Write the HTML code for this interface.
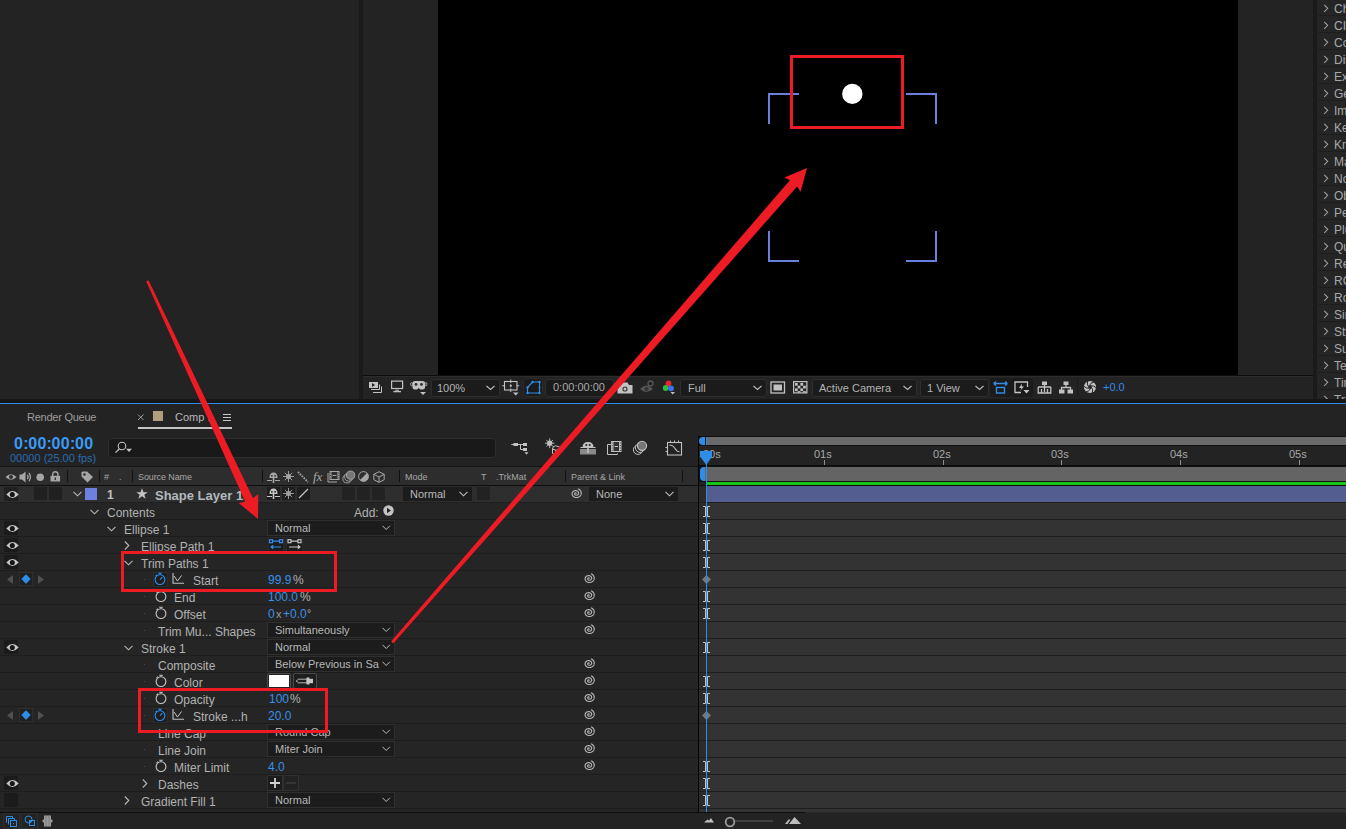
<!DOCTYPE html>
<html><head><meta charset="utf-8"><style>
html,body{margin:0;padding:0;}
body{width:1346px;height:829px;overflow:hidden;position:relative;background:#232323;font-family:"Liberation Sans",sans-serif;}
body>div,body>svg{position:absolute;white-space:pre;}

</style></head><body>
<div style="left:0px;top:0px;width:359px;height:399px;background:#232323;"></div>
<div style="left:359px;top:0px;width:4px;height:399px;background:#1a1a1a;"></div>
<div style="left:363px;top:0px;width:950px;height:375px;background:#232323;"></div>
<div style="left:438px;top:0px;width:800px;height:375px;background:#000;"></div>
<div style="left:363px;top:375px;width:950px;height:1px;background:#0c0c0c;"></div>
<div style="left:363px;top:376px;width:950px;height:23px;background:#232323;"></div>
<div style="left:363px;top:376px;width:950px;height:1px;background:#2c2c2c;"></div>
<div style="left:1313px;top:0px;width:4px;height:399px;background:#1a1a1a;"></div>
<div style="left:1317px;top:0px;width:29px;height:399px;background:#252525;"></div>
<div style="left:1318px;top:15px;width:28px;height:1px;background:#1d1d1d;"></div>
<svg style="left:1322px;top:4px;" width="8" height="9" viewBox="0 0 8 9"><path d="M2.2 0.8 L5.7 4.3 L2.2 7.8" fill="none" stroke="#a0a0a0" stroke-width="1.05"/></svg>
<div style="left:1334px;top:-3.0px;font-size:12px;line-height:24px;color:#a8a8a8;">Channel</div>
<div style="left:1318px;top:32px;width:28px;height:1px;background:#1d1d1d;"></div>
<svg style="left:1322px;top:21px;" width="8" height="9" viewBox="0 0 8 9"><path d="M2.2 0.8 L5.7 4.3 L2.2 7.8" fill="none" stroke="#a0a0a0" stroke-width="1.05"/></svg>
<div style="left:1334px;top:14.0px;font-size:12px;line-height:24px;color:#a8a8a8;">CINEMA 4D</div>
<div style="left:1318px;top:49px;width:28px;height:1px;background:#1d1d1d;"></div>
<svg style="left:1322px;top:38px;" width="8" height="9" viewBox="0 0 8 9"><path d="M2.2 0.8 L5.7 4.3 L2.2 7.8" fill="none" stroke="#a0a0a0" stroke-width="1.05"/></svg>
<div style="left:1334px;top:31.0px;font-size:12px;line-height:24px;color:#a8a8a8;">Color</div>
<div style="left:1318px;top:66px;width:28px;height:1px;background:#1d1d1d;"></div>
<svg style="left:1322px;top:55px;" width="8" height="9" viewBox="0 0 8 9"><path d="M2.2 0.8 L5.7 4.3 L2.2 7.8" fill="none" stroke="#a0a0a0" stroke-width="1.05"/></svg>
<div style="left:1334px;top:48.0px;font-size:12px;line-height:24px;color:#a8a8a8;">Distort</div>
<div style="left:1318px;top:83px;width:28px;height:1px;background:#1d1d1d;"></div>
<svg style="left:1322px;top:72px;" width="8" height="9" viewBox="0 0 8 9"><path d="M2.2 0.8 L5.7 4.3 L2.2 7.8" fill="none" stroke="#a0a0a0" stroke-width="1.05"/></svg>
<div style="left:1334px;top:65.0px;font-size:12px;line-height:24px;color:#a8a8a8;">Expression</div>
<div style="left:1318px;top:100px;width:28px;height:1px;background:#1d1d1d;"></div>
<svg style="left:1322px;top:89px;" width="8" height="9" viewBox="0 0 8 9"><path d="M2.2 0.8 L5.7 4.3 L2.2 7.8" fill="none" stroke="#a0a0a0" stroke-width="1.05"/></svg>
<div style="left:1334px;top:82.0px;font-size:12px;line-height:24px;color:#a8a8a8;">Generate</div>
<div style="left:1318px;top:117px;width:28px;height:1px;background:#1d1d1d;"></div>
<svg style="left:1322px;top:106px;" width="8" height="9" viewBox="0 0 8 9"><path d="M2.2 0.8 L5.7 4.3 L2.2 7.8" fill="none" stroke="#a0a0a0" stroke-width="1.05"/></svg>
<div style="left:1334px;top:99.0px;font-size:12px;line-height:24px;color:#a8a8a8;">Immersive</div>
<div style="left:1318px;top:134px;width:28px;height:1px;background:#1d1d1d;"></div>
<svg style="left:1322px;top:123px;" width="8" height="9" viewBox="0 0 8 9"><path d="M2.2 0.8 L5.7 4.3 L2.2 7.8" fill="none" stroke="#a0a0a0" stroke-width="1.05"/></svg>
<div style="left:1334px;top:116.0px;font-size:12px;line-height:24px;color:#a8a8a8;">Keying</div>
<div style="left:1318px;top:151px;width:28px;height:1px;background:#1d1d1d;"></div>
<svg style="left:1322px;top:140px;" width="8" height="9" viewBox="0 0 8 9"><path d="M2.2 0.8 L5.7 4.3 L2.2 7.8" fill="none" stroke="#a0a0a0" stroke-width="1.05"/></svg>
<div style="left:1334px;top:133.0px;font-size:12px;line-height:24px;color:#a8a8a8;">Knoll</div>
<div style="left:1318px;top:168px;width:28px;height:1px;background:#1d1d1d;"></div>
<svg style="left:1322px;top:157px;" width="8" height="9" viewBox="0 0 8 9"><path d="M2.2 0.8 L5.7 4.3 L2.2 7.8" fill="none" stroke="#a0a0a0" stroke-width="1.05"/></svg>
<div style="left:1334px;top:150.0px;font-size:12px;line-height:24px;color:#a8a8a8;">Matte</div>
<div style="left:1318px;top:185px;width:28px;height:1px;background:#1d1d1d;"></div>
<svg style="left:1322px;top:174px;" width="8" height="9" viewBox="0 0 8 9"><path d="M2.2 0.8 L5.7 4.3 L2.2 7.8" fill="none" stroke="#a0a0a0" stroke-width="1.05"/></svg>
<div style="left:1334px;top:167.0px;font-size:12px;line-height:24px;color:#a8a8a8;">Noise</div>
<div style="left:1318px;top:202px;width:28px;height:1px;background:#1d1d1d;"></div>
<svg style="left:1322px;top:191px;" width="8" height="9" viewBox="0 0 8 9"><path d="M2.2 0.8 L5.7 4.3 L2.2 7.8" fill="none" stroke="#a0a0a0" stroke-width="1.05"/></svg>
<div style="left:1334px;top:184.0px;font-size:12px;line-height:24px;color:#a8a8a8;">Obsolete</div>
<div style="left:1318px;top:219px;width:28px;height:1px;background:#1d1d1d;"></div>
<svg style="left:1322px;top:208px;" width="8" height="9" viewBox="0 0 8 9"><path d="M2.2 0.8 L5.7 4.3 L2.2 7.8" fill="none" stroke="#a0a0a0" stroke-width="1.05"/></svg>
<div style="left:1334px;top:201.0px;font-size:12px;line-height:24px;color:#a8a8a8;">Perspective</div>
<div style="left:1318px;top:236px;width:28px;height:1px;background:#1d1d1d;"></div>
<svg style="left:1322px;top:225px;" width="8" height="9" viewBox="0 0 8 9"><path d="M2.2 0.8 L5.7 4.3 L2.2 7.8" fill="none" stroke="#a0a0a0" stroke-width="1.05"/></svg>
<div style="left:1334px;top:218.0px;font-size:12px;line-height:24px;color:#a8a8a8;">Plugins</div>
<div style="left:1318px;top:253px;width:28px;height:1px;background:#1d1d1d;"></div>
<svg style="left:1322px;top:242px;" width="8" height="9" viewBox="0 0 8 9"><path d="M2.2 0.8 L5.7 4.3 L2.2 7.8" fill="none" stroke="#a0a0a0" stroke-width="1.05"/></svg>
<div style="left:1334px;top:235.0px;font-size:12px;line-height:24px;color:#a8a8a8;">Quick</div>
<div style="left:1318px;top:270px;width:28px;height:1px;background:#1d1d1d;"></div>
<svg style="left:1322px;top:259px;" width="8" height="9" viewBox="0 0 8 9"><path d="M2.2 0.8 L5.7 4.3 L2.2 7.8" fill="none" stroke="#a0a0a0" stroke-width="1.05"/></svg>
<div style="left:1334px;top:252.0px;font-size:12px;line-height:24px;color:#a8a8a8;">Render</div>
<div style="left:1318px;top:287px;width:28px;height:1px;background:#1d1d1d;"></div>
<svg style="left:1322px;top:276px;" width="8" height="9" viewBox="0 0 8 9"><path d="M2.2 0.8 L5.7 4.3 L2.2 7.8" fill="none" stroke="#a0a0a0" stroke-width="1.05"/></svg>
<div style="left:1334px;top:269.0px;font-size:12px;line-height:24px;color:#a8a8a8;">RG Trapcode</div>
<div style="left:1318px;top:304px;width:28px;height:1px;background:#1d1d1d;"></div>
<svg style="left:1322px;top:293px;" width="8" height="9" viewBox="0 0 8 9"><path d="M2.2 0.8 L5.7 4.3 L2.2 7.8" fill="none" stroke="#a0a0a0" stroke-width="1.05"/></svg>
<div style="left:1334px;top:286.0px;font-size:12px;line-height:24px;color:#a8a8a8;">Rowbyte</div>
<div style="left:1318px;top:321px;width:28px;height:1px;background:#1d1d1d;"></div>
<svg style="left:1322px;top:310px;" width="8" height="9" viewBox="0 0 8 9"><path d="M2.2 0.8 L5.7 4.3 L2.2 7.8" fill="none" stroke="#a0a0a0" stroke-width="1.05"/></svg>
<div style="left:1334px;top:303.0px;font-size:12px;line-height:24px;color:#a8a8a8;">Simulation</div>
<div style="left:1318px;top:338px;width:28px;height:1px;background:#1d1d1d;"></div>
<svg style="left:1322px;top:327px;" width="8" height="9" viewBox="0 0 8 9"><path d="M2.2 0.8 L5.7 4.3 L2.2 7.8" fill="none" stroke="#a0a0a0" stroke-width="1.05"/></svg>
<div style="left:1334px;top:320.0px;font-size:12px;line-height:24px;color:#a8a8a8;">Stylize</div>
<div style="left:1318px;top:355px;width:28px;height:1px;background:#1d1d1d;"></div>
<svg style="left:1322px;top:344px;" width="8" height="9" viewBox="0 0 8 9"><path d="M2.2 0.8 L5.7 4.3 L2.2 7.8" fill="none" stroke="#a0a0a0" stroke-width="1.05"/></svg>
<div style="left:1334px;top:337.0px;font-size:12px;line-height:24px;color:#a8a8a8;">Superluminal</div>
<div style="left:1318px;top:372px;width:28px;height:1px;background:#1d1d1d;"></div>
<svg style="left:1322px;top:361px;" width="8" height="9" viewBox="0 0 8 9"><path d="M2.2 0.8 L5.7 4.3 L2.2 7.8" fill="none" stroke="#a0a0a0" stroke-width="1.05"/></svg>
<div style="left:1334px;top:354.0px;font-size:12px;line-height:24px;color:#a8a8a8;">Text</div>
<div style="left:1318px;top:389px;width:28px;height:1px;background:#1d1d1d;"></div>
<svg style="left:1322px;top:378px;" width="8" height="9" viewBox="0 0 8 9"><path d="M2.2 0.8 L5.7 4.3 L2.2 7.8" fill="none" stroke="#a0a0a0" stroke-width="1.05"/></svg>
<div style="left:1334px;top:371.0px;font-size:12px;line-height:24px;color:#a8a8a8;">Time</div>
<div style="left:1318px;top:406px;width:28px;height:1px;background:#1d1d1d;"></div>
<svg style="left:1322px;top:395px;" width="8" height="9" viewBox="0 0 8 9"><path d="M2.2 0.8 L5.7 4.3 L2.2 7.8" fill="none" stroke="#a0a0a0" stroke-width="1.05"/></svg>
<div style="left:1334px;top:388.0px;font-size:12px;line-height:24px;color:#a8a8a8;">Transition</div>
<div style="left:0px;top:399px;width:1346px;height:4px;background:#171717;"></div>
<div style="left:0px;top:403px;width:1346px;height:1px;background:#2d8cec;"></div>
<svg style="left:750px;top:70px;" width="200" height="200" viewBox="0 0 200 200">
<path d="M19 54 V24 H49 M156 24 H186 V54 M19 161 V191 H49 M156 191 H186 V161" fill="none" stroke="#6b7fdc" stroke-width="2"/>
<circle cx="102.3" cy="23.9" r="10.2" fill="#fff"/>
</svg>
<svg style="left:368px;top:381px;" width="16" height="13" viewBox="0 0 16 13"><rect x="1" y="1" width="9" height="6" fill="#c2c2c2"/><path d="M4 2 L7 4 L4 6Z" fill="#232323"/>
<path d="M3 8.5 H11.5 V3.5 M5 11.5 H13.5 V5.5" fill="none" stroke="#c2c2c2" stroke-width="1"/></svg>
<svg style="left:390px;top:380px;" width="14" height="13" viewBox="0 0 14 13"><rect x="1.6" y="1.1" width="11" height="7.4" fill="none" stroke="#c2c2c2" stroke-width="1.2"/><path d="M5.2 10.3 H9 M3.3 11.6 H11" stroke="#c2c2c2" stroke-width="1.1"/></svg>
<svg style="left:410px;top:380px;" width="18" height="16" viewBox="0 0 18 16"><path d="M2.5 3 Q2.5 1 5 1 H12.5 Q15 1 15 3 V7 Q15 9.5 12.5 9.5 H10.5 L8.75 8 L7 9.5 H5 Q2.5 9.5 2.5 7 Z" fill="#c2c2c2"/><ellipse cx="1.6" cy="4.2" rx="1" ry="1.7" fill="none" stroke="#c2c2c2" stroke-width="0.8"/><ellipse cx="15.9" cy="4.2" rx="1" ry="1.7" fill="none" stroke="#c2c2c2" stroke-width="0.8"/><circle cx="6" cy="4.4" r="1.4" fill="#2a2a2a"/><circle cx="11.5" cy="4.4" r="1.4" fill="#2a2a2a"/><path d="M10 12 H16 L13 15Z" fill="#c2c2c2"/></svg>
<div style="left:431px;top:379px;width:69px;height:18px;background:#1b1b1b;border:1px solid #2e2e2e;box-sizing:border-box;border-radius:3px;"></div>
<div style="left:437px;top:377.0px;font-size:11px;line-height:22px;color:#b4b4b4;">100%</div>
<svg style="left:486px;top:385.0px;" width="9" height="6" viewBox="0 0 9 6"><path d="M0.5 1 L4.5 4.5 L8.5 1" fill="none" stroke="#bdbdbd" stroke-width="1.1"/></svg>
<svg style="left:502px;top:379px;" width="18" height="17" viewBox="0 0 18 17"><rect x="2.5" y="2.5" width="12.5" height="8.5" fill="none" stroke="#c2c2c2" stroke-width="1.1"/><path d="M8.75 0.5 V4 M8.75 9.5 V13 M0.3 6.75 H3 M14.5 6.75 H17.2" stroke="#c2c2c2" stroke-width="1"/><path d="M8.75 5 L10 6.75 L8.75 8.5 L7.5 6.75Z" fill="#c2c2c2"/><path d="M11 13.5 H16.5 L13.75 16.5Z" fill="#c2c2c2"/></svg>
<div style="left:523px;top:378px;width:20px;height:19px;background:#1b1b1b;border:1px solid #2c2c2c;box-sizing:border-box;border-radius:4px;"></div>
<svg style="left:523px;top:378px;" width="20" height="19" viewBox="0 0 20 19"><path d="M4.5 9.5 L9.5 4 H16.5 V15 H4.5 Z" fill="none" stroke="#2f8de8" stroke-width="1.2"/><circle cx="4.5" cy="9.5" r="1.2" fill="#2f8de8"/><circle cx="9.5" cy="4" r="1.2" fill="#2f8de8"/><circle cx="16.5" cy="4" r="1.2" fill="#2f8de8"/><circle cx="16.5" cy="15" r="1.2" fill="#2f8de8"/><circle cx="4.5" cy="15" r="1.2" fill="#2f8de8"/><circle cx="16.5" cy="9.5" r="0.9" fill="#2f8de8"/></svg>
<div style="left:545px;top:379px;width:69px;height:18px;background:#1b1b1b;border:1px solid #2e2e2e;box-sizing:border-box;border-radius:3px;"></div>
<div style="left:553px;top:376.0px;font-size:11px;line-height:22px;color:#a8a8a8;">0:00:00:00</div>
<svg style="left:617px;top:382px;" width="16" height="12" viewBox="0 0 16 12"><path d="M0.5 3 H4 L5.5 0.5 H10.5 L12 3 H15.5 V11.5 H0.5Z" fill="#c2c2c2"/><circle cx="8" cy="7" r="2.6" fill="#333"/><circle cx="8" cy="7" r="1.5" fill="#c2c2c2"/></svg>
<svg style="left:639px;top:380px;" width="16" height="14" viewBox="0 0 16 14"><path d="M1 9 Q7 2 14 9 Q7 15 1 9Z" fill="#555"/><circle cx="7.5" cy="9" r="2" fill="#333"/><circle cx="11.5" cy="3.5" r="2.5" fill="none" stroke="#555" stroke-width="1.3"/></svg>
<svg style="left:662px;top:380px;" width="14" height="17" viewBox="0 0 14 17"><circle cx="6.5" cy="3.5" r="2.9" fill="#e8262a"/><circle cx="3.7" cy="8" r="2.9" fill="#33b83a"/><circle cx="9" cy="8.3" r="2.9" fill="#3a73f0"/><path d="M8.5 12 H13 L10.75 14.5Z" fill="#c2c2c2"/></svg>
<div style="left:680px;top:379px;width:87px;height:18px;background:#1b1b1b;border:1px solid #2e2e2e;box-sizing:border-box;border-radius:3px;"></div>
<div style="left:688px;top:377.0px;font-size:11px;line-height:22px;color:#b4b4b4;">Full</div>
<svg style="left:753px;top:385.0px;" width="9" height="6" viewBox="0 0 9 6"><path d="M0.5 1 L4.5 4.5 L8.5 1" fill="none" stroke="#bdbdbd" stroke-width="1.1"/></svg>
<svg style="left:770px;top:381px;" width="16" height="13" viewBox="0 0 16 13"><rect x="1" y="1" width="13.5" height="11" fill="none" stroke="#c2c2c2" stroke-width="1.3"/><rect x="3.5" y="3.5" width="8.5" height="6" fill="#c2c2c2"/></svg>
<svg style="left:793px;top:381px;" width="15" height="13" viewBox="0 0 15 13"><rect x="0.6" y="0.6" width="13.3" height="11.3" fill="none" stroke="#c2c2c2" stroke-width="1.2"/>
<rect x="2" y="2" width="2.7" height="2.7" fill="#c2c2c2"/><rect x="7.4" y="2" width="2.7" height="2.7" fill="#c2c2c2"/>
<rect x="4.7" y="4.7" width="2.7" height="2.7" fill="#c2c2c2"/><rect x="10.1" y="4.7" width="2.7" height="2.7" fill="#c2c2c2"/>
<rect x="2" y="7.4" width="2.7" height="2.7" fill="#c2c2c2"/><rect x="7.4" y="7.4" width="2.7" height="2.7" fill="#c2c2c2"/>
<rect x="4.7" y="10.1" width="2.7" height="1.5" fill="#c2c2c2"/><rect x="10.1" y="10.1" width="2.7" height="1.5" fill="#c2c2c2"/></svg>
<div style="left:812px;top:379px;width:105px;height:18px;background:#1b1b1b;border:1px solid #2e2e2e;box-sizing:border-box;border-radius:3px;"></div>
<div style="left:819px;top:377.0px;font-size:11px;line-height:22px;color:#b4b4b4;">Active Camera</div>
<svg style="left:903px;top:385.0px;" width="9" height="6" viewBox="0 0 9 6"><path d="M0.5 1 L4.5 4.5 L8.5 1" fill="none" stroke="#bdbdbd" stroke-width="1.1"/></svg>
<div style="left:920px;top:379px;width:69px;height:18px;background:#1b1b1b;border:1px solid #2e2e2e;box-sizing:border-box;border-radius:3px;"></div>
<div style="left:927px;top:377.0px;font-size:11px;line-height:22px;color:#b4b4b4;">1 View</div>
<svg style="left:975px;top:385.0px;" width="9" height="6" viewBox="0 0 9 6"><path d="M0.5 1 L4.5 4.5 L8.5 1" fill="none" stroke="#bdbdbd" stroke-width="1.1"/></svg>
<div style="left:990px;top:378px;width:21px;height:19px;background:#1b1b1b;border-radius:3px;"></div>
<svg style="left:992px;top:381px;" width="17" height="13" viewBox="0 0 17 13"><path d="M1.5 2.5 H15.5 M1.5 2.5 L4 0.5 M1.5 2.5 L4 4.5 M15.5 2.5 L13 0.5 M15.5 2.5 L13 4.5" fill="none" stroke="#2f8de8" stroke-width="1.3"/><rect x="4.5" y="6.5" width="8" height="5.5" fill="none" stroke="#2f8de8" stroke-width="1.4"/></svg>
<div style="left:1011px;top:378px;width:22px;height:19px;background:#1b1b1b;border-radius:3px;"></div>
<svg style="left:1014px;top:381px;" width="16" height="14" viewBox="0 0 16 14"><path d="M13.5 6 V1 H1 V11.5 H7" fill="none" stroke="#c2c2c2" stroke-width="1.3"/><path d="M8 2.5 L5 7 H7.5 L6 10 L10 5.5 H7.8 Z" fill="#c2c2c2"/><path d="M9.5 9 H15.5 L12.5 12.5Z" fill="#c2c2c2"/></svg>
<svg style="left:1037px;top:381px;" width="15" height="13" viewBox="0 0 15 13"><rect x="5" y="0.5" width="5" height="3.5" fill="#c2c2c2"/><path d="M7.5 4 V11 M1.2 6 V12 H13.8 V6 M4.5 8 V12 M10.5 8 V12 M1.2 6 H13.8" fill="none" stroke="#c2c2c2" stroke-width="1.3"/></svg>
<svg style="left:1059px;top:381px;" width="14" height="13" viewBox="0 0 14 13"><rect x="4.5" y="0.5" width="5" height="3.5" fill="#c2c2c2"/><path d="M7 4 V6.5 M2.5 9 V6.5 H11.5 V9" fill="none" stroke="#c2c2c2" stroke-width="1.3"/><rect x="0" y="8.5" width="5.5" height="4" fill="#c2c2c2"/><rect x="8.5" y="8.5" width="5.5" height="4" fill="#c2c2c2"/></svg>
<div style="left:1077px;top:379px;width:1px;height:17px;background:#1a1a1a;"></div>
<svg style="left:1083px;top:380px;" width="14" height="14" viewBox="0 0 14 14"><circle cx="7" cy="7" r="6.1" fill="#c2c2c2"/><circle cx="7" cy="7" r="1.9" fill="#232323"/><path d="M8.69 7.62 Q10.44 9.41 9.26 13.20 M7.31 8.77 Q6.63 11.18 2.76 12.06 M5.62 8.16 Q3.19 8.77 0.50 5.85 M5.31 6.38 Q3.56 4.59 4.74 0.80 M6.69 5.23 Q7.37 2.82 11.24 1.94 M8.38 5.84 Q10.81 5.23 13.50 8.15" fill="none" stroke="#232323" stroke-width="1"/></svg>
<div style="left:1103px;top:376.0px;font-size:11px;line-height:22px;color:#2f8de8;">+0.0</div>
<div style="left:27px;top:406.0px;font-size:11px;line-height:22px;color:#9c9c9c;letter-spacing:-0.25px;">Render Queue</div>
<svg style="left:137px;top:413px;" width="8" height="8" viewBox="0 0 8 8"><path d="M1 1.5 L6.5 7 M6.5 1.5 L1 7" stroke="#a0a0a0" stroke-width="1"/></svg>
<div style="left:153px;top:411px;width:10px;height:10px;background:#b09e7e;"></div>
<div style="left:175px;top:406.0px;font-size:11px;line-height:22px;color:#b8b8b8;">Comp 1</div>
<svg style="left:223px;top:413px;" width="9" height="9" viewBox="0 0 9 9"><path d="M0 1.5 H8 M0 4.5 H8 M0 7.5 H8" stroke="#c8c8c8" stroke-width="1"/></svg>
<div style="left:138px;top:427px;width:94px;height:2px;background:#c4c4c4;"></div>
<div style="left:14px;top:427.5px;font-size:16px;line-height:32px;color:#3b9af5;font-weight:bold;letter-spacing:0.3px;">0<span style="letter-spacing:-0.3px">:</span>0<span style="letter-spacing:0.2px">0</span><span style="letter-spacing:-0.3px">:</span>0<span style="letter-spacing:0.2px">0</span><span style="letter-spacing:-0.3px">:</span>0<span style="letter-spacing:0.2px">0</span></div>
<div style="left:10px;top:446.5px;font-size:11px;line-height:22px;color:#2a6bb0;">00000 (25.00 fps)</div>
<div style="left:108px;top:438px;width:388px;height:20px;background:#191919;border:1px solid #2e2e2e;box-sizing:border-box;border-radius:4px;"></div>
<svg style="left:113px;top:440px;" width="20" height="15" viewBox="0 0 20 15"><circle cx="9" cy="6" r="3.8" fill="none" stroke="#c2c2c2" stroke-width="1.1"/><path d="M6.4 8.7 L2.5 12.6" stroke="#c2c2c2" stroke-width="1.3"/><path d="M13 8.8 H19 L16 12Z" fill="#c2c2c2"/></svg>
<svg style="left:511px;top:441px;" width="19" height="15" viewBox="0 0 19 15"><path d="M0.3 3.5 H3 M7 3.5 H12 M9.5 3.5 V8.5 H12" fill="none" stroke="#c2c2c2" stroke-width="1"/><rect x="2.5" y="2" width="4.5" height="3" fill="#c2c2c2"/><rect x="12" y="2" width="4" height="3" fill="#c2c2c2"/><rect x="12" y="7" width="4" height="3" fill="#c2c2c2"/><path d="M13.5 11.3 H17.5 L15.5 13.8Z" fill="#c2c2c2"/></svg>
<svg style="left:545px;top:438px;" width="18" height="18" viewBox="0 0 18 18"><circle cx="4.7" cy="5.2" r="2.6" fill="#c2c2c2"/><path d="M4.7 0.3 V10.2 M0 5.2 H9.4 M1.4 1.9 L8 8.5 M8 1.9 L1.4 8.5" stroke="#c2c2c2" stroke-width="0.9"/><path d="M7.5 11 Q7.5 8 10.5 7.8 L14.5 9 V15.5 L10.5 17 L7.5 15.5Z M7.5 11 L11 12.3 L14.5 11 M11 12.3 V17" fill="none" stroke="#c2c2c2" stroke-width="1"/></svg>
<svg style="left:579px;top:441px;" width="18" height="15" viewBox="0 0 18 15"><rect x="1" y="8" width="16" height="5.5" fill="#8a8a8a"/><path d="M3.5 6.5 Q3.5 1 9 1 Q14.5 1 14.5 6.5Z" fill="#c2c2c2"/><path d="M1.5 6.5 H16.5" stroke="#c2c2c2" stroke-width="1"/><circle cx="7.3" cy="4" r="1.1" fill="#2a2a2a"/><circle cx="10.7" cy="4" r="1.1" fill="#2a2a2a"/><path d="M9 5 V12" stroke="#c2c2c2" stroke-width="1.6"/></svg>
<svg style="left:606px;top:440px;" width="17" height="16" viewBox="0 0 17 16"><path d="M1.5 4.5 V14.5 H11.5 V13.5" fill="none" stroke="#c2c2c2" stroke-width="1"/><path d="M1.5 4.5 H5" stroke="#c2c2c2" stroke-width="1"/><rect x="5" y="1" width="10.5" height="11" fill="#c2c2c2"/><rect x="7.5" y="2" width="5.5" height="9" fill="#333"/><path d="M8.5 6.5 H12" stroke="#c2c2c2" stroke-width="1"/><path d="M6.2 2.5 V3.5 M6.2 5 V6 M6.2 7.5 V8.5 M6.2 10 V11 M14.3 2.5 V3.5 M14.3 5 V6 M14.3 7.5 V8.5 M14.3 10 V11 M2.5 6 V7 M2.5 8.5 V9.5 M2.5 11 V12" stroke="#333" stroke-width="0.9"/></svg>
<svg style="left:632px;top:440px;" width="16" height="16" viewBox="0 0 16 16"><circle cx="6" cy="9.8" r="4.6" fill="#232323" stroke="#c2c2c2" stroke-width="1"/><circle cx="8" cy="7.8" r="4.6" fill="#232323" stroke="#c2c2c2" stroke-width="1"/><circle cx="10" cy="5.8" r="4.6" fill="#777" stroke="#c2c2c2" stroke-width="1.1"/></svg>
<svg style="left:665px;top:439px;" width="18" height="17" viewBox="0 0 18 17"><rect x="2.5" y="3.5" width="14" height="12.5" fill="none" stroke="#c2c2c2" stroke-width="1.1"/><path d="M5.5 1.5 V3.5 M9.5 1.5 V3.5 M13.5 1.5 V3.5 M0.5 8.5 H2.5 M0.5 12.5 H2.5" stroke="#c2c2c2" stroke-width="1"/><path d="M4.5 6.2 H6 Q8 6.2 10 9.5 Q12 12.8 14.5 12.8" fill="none" stroke="#c2c2c2" stroke-width="1.1"/></svg>
<div style="left:0px;top:466px;width:698px;height:1px;background:#141414;"></div>
<div style="left:0px;top:467px;width:698px;height:18px;background:#2d2d2d;"></div>
<div style="left:0px;top:485px;width:698px;height:1px;background:#0e0e0e;"></div>
<svg style="left:5px;top:473px;" width="12" height="8" viewBox="0 0 12 8"><path d="M0.5 4 Q6 -1.5 11.5 4 Q6 9.5 0.5 4Z" fill="#a6a6a6"/><circle cx="6" cy="4" r="2" fill="#2d2d2d"/></svg>
<svg style="left:19px;top:471px;" width="13" height="12" viewBox="0 0 13 12"><path d="M0.5 3.5 H3 L6.5 0.5 V11.5 L3 8.5 H0.5Z" fill="#a6a6a6"/><path d="M8.3 3.8 Q9.8 6 8.3 8.2 M10 1.8 Q12.8 6 10 10.2" fill="none" stroke="#a6a6a6" stroke-width="1.3"/></svg>
<svg style="left:36px;top:473px;" width="9" height="9" viewBox="0 0 9 9"><circle cx="4.2" cy="4.3" r="3.8" fill="#a6a6a6"/></svg>
<svg style="left:50px;top:471px;" width="11" height="11" viewBox="0 0 11 11"><path d="M2.7 5 V3.3 Q2.7 0.8 5.3 0.8 Q7.9 0.8 7.9 3.3 V5" fill="none" stroke="#a6a6a6" stroke-width="1.4"/><rect x="0.5" y="4.8" width="9.6" height="5.7" fill="#a6a6a6"/><path d="M5.3 6.5 V9" stroke="#2d2d2d" stroke-width="1.3"/></svg>
<div style="left:67px;top:470px;width:1px;height:12px;background:#111;"></div>
<svg style="left:81px;top:471px;" width="13" height="12" viewBox="0 0 13 12"><path d="M0.5 1.5 V5.5 L6.5 11.5 L12 6 L6 0.5 H1.5Z" fill="#a6a6a6"/><circle cx="3.5" cy="3.5" r="1.3" fill="#2d2d2d"/></svg>
<div style="left:99px;top:470px;width:1px;height:12px;background:#111;"></div>
<div style="left:104px;top:468.0px;font-size:9px;line-height:18px;color:#a6a6a6;">#</div>
<div style="left:119px;top:468.0px;font-size:9px;line-height:18px;color:#a6a6a6;">.</div>
<div style="left:132px;top:470px;width:1px;height:12px;background:#111;"></div>
<div style="left:138px;top:468.0px;font-size:9px;line-height:18px;color:#a6a6a6;letter-spacing:-0.1px;">Source Name</div>
<div style="left:262px;top:470px;width:1px;height:12px;background:#111;"></div>
<svg style="left:267px;top:472px;" width="13" height="12" viewBox="0 0 13 12"><path d="M2.5 6 Q2.5 0.5 6.5 0.5 Q10.5 0.5 10.5 6Z" fill="#a6a6a6"/><circle cx="4.9" cy="3.8" r="0.9" fill="#2d2d2d"/><circle cx="8.1" cy="3.8" r="0.9" fill="#2d2d2d"/><path d="M0 8.5 H5 M8 8.5 H13" stroke="#a6a6a6" stroke-width="1.1"/><path d="M6.5 5 V11" stroke="#a6a6a6" stroke-width="1.6"/></svg>
<svg style="left:283px;top:471px;" width="11" height="11" viewBox="0 0 11 11"><circle cx="5.5" cy="5.5" r="2.5" fill="#a6a6a6"/><path d="M5.5 0 V11 M0 5.5 H11 M1.8 1.8 L9.2 9.2 M9.2 1.8 L1.8 9.2" stroke="#a6a6a6" stroke-width="0.9"/></svg>
<svg style="left:297px;top:471px;" width="12" height="12" viewBox="0 0 12 12"><path d="M1 1 L11 11" stroke="#a6a6a6" stroke-width="1.8" stroke-dasharray="1.6 1.1"/></svg>
<div style="left:313px;top:463.5px;font-size:13px;line-height:26px;color:#a6a6a6;font-style:italic;font-family:'Liberation Serif',serif;">fx</div>
<svg style="left:327px;top:470px;" width="13" height="13" viewBox="0 0 13 13"><path d="M1 3 V12 H10" fill="none" stroke="#a6a6a6" stroke-width="1"/><rect x="2.5" y="1" width="10" height="9" fill="#a6a6a6"/><rect x="4.5" y="2" width="6" height="7" fill="#2d2d2d"/><path d="M5.5 5.5 H9.5" stroke="#a6a6a6" stroke-width="1"/><path d="M3.5 2.5 V3.5 M3.5 5 V6 M3.5 7.5 V8.5 M11.5 2.5 V3.5 M11.5 5 V6 M11.5 7.5 V8.5" stroke="#2d2d2d" stroke-width="0.8"/></svg>
<svg style="left:342px;top:470px;" width="14" height="14" viewBox="0 0 14 14"><circle cx="5" cy="8.8" r="4.1" fill="#2d2d2d" stroke="#a6a6a6" stroke-width="0.9"/><circle cx="6.8" cy="7" r="4.1" fill="#2d2d2d" stroke="#a6a6a6" stroke-width="0.9"/><circle cx="8.6" cy="5.2" r="4.1" fill="#777" stroke="#a6a6a6" stroke-width="1"/></svg>
<svg style="left:358px;top:471px;" width="11" height="11" viewBox="0 0 11 11"><circle cx="5.5" cy="5.5" r="4.9" fill="#2d2d2d" stroke="#a6a6a6" stroke-width="1"/><path d="M9 2 A4.9 4.9 0 0 1 2 9Z" fill="#a6a6a6"/></svg>
<svg style="left:373px;top:471px;" width="12" height="12" viewBox="0 0 12 12"><path d="M6 0.7 L11.2 3.3 V8.7 L6 11.3 L0.8 8.7 V3.3Z M0.8 3.3 L6 6 L11.2 3.3 M6 6 V11.3" fill="none" stroke="#a6a6a6" stroke-width="1"/></svg>
<div style="left:399px;top:470px;width:1px;height:12px;background:#111;"></div>
<div style="left:405px;top:468.0px;font-size:9px;line-height:18px;color:#a6a6a6;">Mode</div>
<div style="left:481px;top:468.0px;font-size:9px;line-height:18px;color:#a6a6a6;">T</div>
<div style="left:496px;top:468.0px;font-size:9px;line-height:18px;color:#a6a6a6;">.TrkMat</div>
<div style="left:565px;top:470px;width:1px;height:12px;background:#111;"></div>
<div style="left:571px;top:468.0px;font-size:9px;line-height:18px;color:#a6a6a6;">Parent &amp; Link</div>
<div style="left:682px;top:470px;width:1px;height:12px;background:#111;"></div>
<div style="left:0px;top:486px;width:698px;height:16px;background:#2e2e2e;"></div>
<div style="left:0px;top:502px;width:698px;height:1px;background:#1f1f1f;"></div>
<div style="left:4px;top:487px;width:14px;height:14px;background:#202020;"></div>
<svg style="left:5.5px;top:490px;" width="13" height="9" viewBox="0 0 13 9"><path d="M0.3 4.5 Q6.5 -2.3 12.7 4.5 Q6.5 11.3 0.3 4.5Z" fill="#c8c8c8"/><ellipse cx="6.3" cy="4.5" rx="2.5" ry="2.6" fill="#161616"/></svg>
<div style="left:34px;top:487px;width:13px;height:13px;background:#202020;"></div>
<div style="left:49px;top:487px;width:13px;height:13px;background:#202020;"></div>
<svg style="left:73px;top:491px;" width="9" height="6" viewBox="0 0 9 6"><path d="M0.5 0.8 L4.5 4.8 L8.5 0.8" fill="none" stroke="#b8b8b8" stroke-width="1.1"/></svg>
<div style="left:85px;top:488px;width:12px;height:12px;background:#6c80e0;"></div>
<div style="left:107px;top:483.0px;font-size:12px;line-height:24px;color:#c0c0c0;font-weight:bold;">1</div>
<svg style="left:136px;top:488px;" width="12" height="11" viewBox="0 0 12 11"><path d="M6 0.3 L7.5 4.2 L11.7 4.2 L8.3 6.8 L9.6 10.8 L6 8.3 L2.4 10.8 L3.7 6.8 L0.3 4.2 L4.5 4.2Z" fill="#c4c4c4"/></svg>
<div style="left:155px;top:482.5px;font-size:13px;line-height:26px;color:#b3b8bd;font-weight:bold;">Shape Layer 1</div>
<div style="left:267px;top:487px;width:13px;height:13px;background:#1e1e1e;"></div>
<svg style="left:267px;top:488px;" width="13" height="12" viewBox="0 0 13 12"><path d="M2.5 6 Q2.5 0.5 6.5 0.5 Q10.5 0.5 10.5 6Z" fill="#c4c4c4"/><circle cx="4.9" cy="3.8" r="0.9" fill="#1e1e1e"/><circle cx="8.1" cy="3.8" r="0.9" fill="#1e1e1e"/><path d="M0 8.5 H5 M8 8.5 H13" stroke="#c4c4c4" stroke-width="1.1"/><path d="M6.5 5 V11" stroke="#c4c4c4" stroke-width="1.6"/></svg>
<div style="left:282px;top:487px;width:13px;height:13px;background:#1e1e1e;"></div>
<svg style="left:283px;top:488px;" width="11" height="11" viewBox="0 0 11 11"><circle cx="5.5" cy="5.5" r="2.5" fill="#a0a0a0"/><path d="M5.5 0 V11 M0 5.5 H11 M1.8 1.8 L9.2 9.2 M9.2 1.8 L1.8 9.2" stroke="#a0a0a0" stroke-width="0.9"/></svg>
<div style="left:297px;top:487px;width:13px;height:13px;background:#1e1e1e;"></div>
<svg style="left:297px;top:487px;" width="13" height="13" viewBox="0 0 13 13"><path d="M2 11 L11 2" stroke="#c4c4c4" stroke-width="1.2"/></svg>
<div style="left:342px;top:487px;width:13px;height:13px;background:#222222;"></div>
<div style="left:357px;top:487px;width:13px;height:13px;background:#222222;"></div>
<div style="left:372px;top:487px;width:13px;height:13px;background:#222222;"></div>
<div style="left:403px;top:487px;width:69px;height:14px;background:#1c1c1c;"></div>
<div style="left:410px;top:483.0px;font-size:11px;line-height:22px;color:#b8b8b8;">Normal</div>
<svg style="left:459px;top:491px;" width="9" height="6" viewBox="0 0 9 6"><path d="M0.5 0.8 L4.5 4.8 L8.5 0.8" fill="none" stroke="#bdbdbd" stroke-width="1.1"/></svg>
<div style="left:477px;top:487px;width:13px;height:13px;background:#222222;"></div>
<svg style="left:569px;top:487px;" width="14" height="13" viewBox="0 0 14 13"><path d="M7.20 6.31 L7.21 6.26 L7.20 6.20 L7.18 6.15 L7.15 6.10 L7.11 6.05 L7.06 6.00 L7.00 5.96 L6.93 5.92 L6.85 5.89 L6.76 5.87 L6.67 5.86 L6.57 5.87 L6.47 5.88 L6.36 5.90 L6.26 5.94 L6.16 5.99 L6.06 6.05 L5.97 6.13 L5.89 6.22 L5.82 6.32 L5.76 6.43 L5.71 6.55 L5.68 6.67 L5.66 6.81 L5.67 6.94 L5.69 7.09 L5.73 7.23 L5.79 7.37 L5.87 7.50 L5.97 7.64 L6.09 7.76 L6.23 7.87 L6.39 7.98 L6.56 8.06 L6.75 8.13 L6.95 8.19 L7.16 8.22 L7.37 8.24 L7.60 8.23 L7.82 8.20 L8.04 8.15 L8.27 8.07 L8.48 7.97 L8.68 7.85 L8.87 7.71 L9.05 7.55 L9.21 7.36 L9.34 7.16 L9.45 6.95 L9.54 6.72 L9.59 6.47 L9.62 6.22 L9.62 5.97 L9.58 5.71 L9.51 5.46 L9.41 5.21 L9.27 4.96 L9.10 4.73 L8.91 4.51 L8.68 4.31 L8.42 4.13 L8.14 3.97 L7.84 3.84 L7.52 3.74 L7.18 3.67 L6.83 3.63 L6.48 3.62 L6.12 3.65 L5.76 3.71 L5.41 3.81 L5.06 3.94 L4.73 4.11 L4.42 4.31 L4.14 4.54 L3.87 4.80 L3.65 5.09 L3.45 5.40 L3.29 5.73 L3.17 6.08 L3.10 6.44 L3.07 6.81 L3.09 7.19 L3.15 7.56 L3.26 7.94 L3.42 8.30 L3.62 8.65 L3.87 8.98 L4.16 9.29 L4.49 9.58 L4.86 9.83 L5.26 10.05 L5.69 10.23 L6.14 10.37 L6.61 10.47 L7.10 10.53 L7.60 10.53 L8.09 10.49 L8.59 10.40 L9.07 10.27 L9.54 10.08 L9.99 9.85 L10.42 9.58 L10.81 9.27 L11.16 8.91 L11.47 8.52 L11.73 8.11 L11.94 7.66 L12.10 7.19 L12.20 6.71 L12.24 6.22 L12.22 5.72 L12.14 5.22 L11.99 4.73 L11.79 4.25 L11.53 3.79 L11.20 3.35 L10.83 2.94 L10.40 2.57 L9.93 2.24 L9.41 1.95" fill="none" stroke="#b4b4b4" stroke-width="1.15" stroke-linecap="round"/></svg>
<div style="left:589px;top:487px;width:89px;height:14px;background:#1c1c1c;"></div>
<div style="left:596px;top:483.0px;font-size:11px;line-height:22px;color:#b8b8b8;">None</div>
<svg style="left:665px;top:491px;" width="9" height="6" viewBox="0 0 9 6"><path d="M0.5 0.8 L4.5 4.8 L8.5 0.8" fill="none" stroke="#bdbdbd" stroke-width="1.1"/></svg>
<div style="left:0px;top:503px;width:698px;height:16px;background:#252525;"></div>
<div style="left:0px;top:519px;width:698px;height:1px;background:#1d1d1d;"></div>
<div style="left:0px;top:520px;width:698px;height:16px;background:#252525;"></div>
<div style="left:0px;top:536px;width:698px;height:1px;background:#1d1d1d;"></div>
<div style="left:0px;top:537px;width:698px;height:16px;background:#252525;"></div>
<div style="left:0px;top:553px;width:698px;height:1px;background:#1d1d1d;"></div>
<div style="left:0px;top:554px;width:698px;height:16px;background:#252525;"></div>
<div style="left:0px;top:570px;width:698px;height:1px;background:#1d1d1d;"></div>
<div style="left:0px;top:571px;width:698px;height:16px;background:#252525;"></div>
<div style="left:0px;top:587px;width:698px;height:1px;background:#1d1d1d;"></div>
<div style="left:0px;top:588px;width:698px;height:16px;background:#252525;"></div>
<div style="left:0px;top:604px;width:698px;height:1px;background:#1d1d1d;"></div>
<div style="left:0px;top:605px;width:698px;height:16px;background:#252525;"></div>
<div style="left:0px;top:621px;width:698px;height:1px;background:#1d1d1d;"></div>
<div style="left:0px;top:622px;width:698px;height:16px;background:#252525;"></div>
<div style="left:0px;top:638px;width:698px;height:1px;background:#1d1d1d;"></div>
<div style="left:0px;top:639px;width:698px;height:16px;background:#252525;"></div>
<div style="left:0px;top:655px;width:698px;height:1px;background:#1d1d1d;"></div>
<div style="left:0px;top:656px;width:698px;height:16px;background:#252525;"></div>
<div style="left:0px;top:672px;width:698px;height:1px;background:#1d1d1d;"></div>
<div style="left:0px;top:673px;width:698px;height:16px;background:#252525;"></div>
<div style="left:0px;top:689px;width:698px;height:1px;background:#1d1d1d;"></div>
<div style="left:0px;top:690px;width:698px;height:16px;background:#252525;"></div>
<div style="left:0px;top:706px;width:698px;height:1px;background:#1d1d1d;"></div>
<div style="left:0px;top:707px;width:698px;height:16px;background:#252525;"></div>
<div style="left:0px;top:723px;width:698px;height:1px;background:#1d1d1d;"></div>
<div style="left:0px;top:724px;width:698px;height:16px;background:#252525;"></div>
<div style="left:0px;top:740px;width:698px;height:1px;background:#1d1d1d;"></div>
<div style="left:0px;top:741px;width:698px;height:16px;background:#252525;"></div>
<div style="left:0px;top:757px;width:698px;height:1px;background:#1d1d1d;"></div>
<div style="left:0px;top:758px;width:698px;height:16px;background:#252525;"></div>
<div style="left:0px;top:774px;width:698px;height:1px;background:#1d1d1d;"></div>
<div style="left:0px;top:775px;width:698px;height:16px;background:#252525;"></div>
<div style="left:0px;top:791px;width:698px;height:1px;background:#1d1d1d;"></div>
<div style="left:0px;top:792px;width:698px;height:16px;background:#252525;"></div>
<div style="left:0px;top:808px;width:698px;height:1px;background:#1d1d1d;"></div>
<svg style="left:90px;top:509px;" width="9" height="6" viewBox="0 0 9 6"><path d="M0.5 0.8 L4.5 4.8 L8.5 0.8" fill="none" stroke="#b8b8b8" stroke-width="1.1"/></svg>
<div style="left:107px;top:501.0px;font-size:12px;line-height:24px;color:#b2b2b2;">Contents</div>
<div style="left:354px;top:501.0px;font-size:12px;line-height:24px;color:#b4b4b4;">Add:</div>
<svg style="left:383px;top:505px;" width="11" height="11" viewBox="0 0 11 11"><circle cx="5.5" cy="5.5" r="5.2" fill="#c4c4c4"/><path d="M4 2.8 L8 5.5 L4 8.2Z" fill="#252525"/></svg>
<div style="left:4px;top:521px;width:14px;height:14px;background:#1b1b1b;"></div>
<svg style="left:5.5px;top:524px;" width="13" height="9" viewBox="0 0 13 9"><path d="M0.3 4.5 Q6.5 -2.3 12.7 4.5 Q6.5 11.3 0.3 4.5Z" fill="#c8c8c8"/><ellipse cx="6.3" cy="4.5" rx="2.5" ry="2.6" fill="#161616"/></svg>
<svg style="left:107px;top:526px;" width="9" height="6" viewBox="0 0 9 6"><path d="M0.5 0.8 L4.5 4.8 L8.5 0.8" fill="none" stroke="#b8b8b8" stroke-width="1.1"/></svg>
<div style="left:124px;top:518.0px;font-size:12px;line-height:24px;color:#b2b2b2;">Ellipse 1</div>
<div style="left:267px;top:520px;width:128px;height:16px;background:#1c1c1c;border:1px solid #2f2f2f;box-sizing:border-box;"></div>
<div style="left:275px;top:516.5px;font-size:11px;line-height:22px;color:#b8b8b8;">Normal</div>
<svg style="left:381.5px;top:525px;" width="9" height="6" viewBox="0 0 9 6"><path d="M0.5 0.8 L4.2 4.5 L7.9 0.8" fill="none" stroke="#bdbdbd" stroke-width="1"/></svg>
<div style="left:4px;top:538px;width:14px;height:14px;background:#1b1b1b;"></div>
<svg style="left:5.5px;top:541px;" width="13" height="9" viewBox="0 0 13 9"><path d="M0.3 4.5 Q6.5 -2.3 12.7 4.5 Q6.5 11.3 0.3 4.5Z" fill="#c8c8c8"/><ellipse cx="6.3" cy="4.5" rx="2.5" ry="2.6" fill="#161616"/></svg>
<svg style="left:124px;top:541px;" width="6" height="9" viewBox="0 0 6 9"><path d="M0.8 0.5 L4.8 4.5 L0.8 8.5" fill="none" stroke="#b8b8b8" stroke-width="1.1"/></svg>
<div style="left:141px;top:535.0px;font-size:12px;line-height:24px;color:#b2b2b2;">Ellipse Path 1</div>
<div style="left:268px;top:537px;width:16px;height:15px;background:#1c1c1c;border:1px solid #2b2b2b;box-sizing:border-box;"></div>
<svg style="left:268px;top:537px;" width="16" height="15" viewBox="0 0 16 15"><rect x="1.5" y="2.7" width="3" height="3" fill="none" stroke="#2f8de8" stroke-width="1.2"/><rect x="11.5" y="2.7" width="3" height="3" fill="none" stroke="#2f8de8" stroke-width="1.2"/><path d="M4.5 4.2 H11.5 M4.5 10 H13" stroke="#2f8de8" stroke-width="1.2"/><path d="M2 10 L5.2 7.4 L5.2 12.6Z" fill="#2f8de8"/></svg>
<div style="left:286px;top:537px;width:17px;height:15px;background:#1c1c1c;border:1px solid #2b2b2b;box-sizing:border-box;"></div>
<svg style="left:286px;top:537px;" width="17" height="15" viewBox="0 0 17 15"><rect x="2" y="2.7" width="3" height="3" fill="none" stroke="#c4c4c4" stroke-width="1.2"/><rect x="12" y="2.7" width="3" height="3" fill="none" stroke="#c4c4c4" stroke-width="1.2"/><path d="M5 4.2 H12 M3 10 H12" stroke="#c4c4c4" stroke-width="1.2"/><path d="M15 10 L11.8 7.4 L11.8 12.6Z" fill="#c4c4c4"/></svg>
<div style="left:4px;top:555px;width:14px;height:14px;background:#1b1b1b;"></div>
<svg style="left:5.5px;top:558px;" width="13" height="9" viewBox="0 0 13 9"><path d="M0.3 4.5 Q6.5 -2.3 12.7 4.5 Q6.5 11.3 0.3 4.5Z" fill="#c8c8c8"/><ellipse cx="6.3" cy="4.5" rx="2.5" ry="2.6" fill="#161616"/></svg>
<svg style="left:124px;top:560px;" width="9" height="6" viewBox="0 0 9 6"><path d="M0.5 0.8 L4.5 4.8 L8.5 0.8" fill="none" stroke="#b8b8b8" stroke-width="1.1"/></svg>
<div style="left:141px;top:552.0px;font-size:12px;line-height:24px;color:#b2b2b2;">Trim Paths 1</div>
<svg style="left:7px;top:575px;" width="6" height="9" viewBox="0 0 6 9"><path d="M6 0 V9 L0 4.5Z" fill="#4f4f4f"/></svg>
<div style="left:19px;top:572px;width:14px;height:14px;background:#202020;border:1px solid #2e2e2e;box-sizing:border-box;"></div>
<svg style="left:21px;top:574px;" width="10" height="10" viewBox="0 0 10 10"><path d="M5 0.3 L9.7 5 L5 9.7 L0.3 5Z" fill="#2f8de8"/></svg>
<svg style="left:38px;top:575px;" width="6" height="9" viewBox="0 0 6 9"><path d="M0 0 V9 L6 4.5Z" fill="#4f4f4f"/></svg>
<div style="left:144px;top:579px;width:1px;height:1px;background:#4a4a4a;"></div>
<div style="left:153px;top:572px;width:15px;height:15px;background:#1e1e1e;border:1px solid #2c2c2c;box-sizing:border-box;"></div>
<svg style="left:154px;top:572px;" width="12" height="13" viewBox="0 0 12 13"><circle cx="6" cy="7.6" r="4.9" fill="none" stroke="#2f8de8" stroke-width="1.15"/><path d="M4.2 1.2 H7.8 M6 1.2 V2.7 M1.6 3.9 L2.9 2.6" stroke="#2f8de8" stroke-width="1.1"/><path d="M6 7.6 L8.4 5.2" stroke="#2f8de8" stroke-width="1.1"/></svg>
<svg style="left:172px;top:573px;" width="12" height="11" viewBox="0 0 12 11"><path d="M1 0 V10.3 H12" fill="none" stroke="#c4c4c4" stroke-width="1.1"/><path d="M2 3 L5.5 8 L9.5 2.5" fill="none" stroke="#c4c4c4" stroke-width="1"/></svg>
<div style="left:193px;top:569.0px;font-size:12px;line-height:24px;color:#b2b2b2;">Start</div>
<div style="left:268px;top:568.0px;font-size:12px;line-height:24px;color:#3a8fe6;">99.9</div>
<div style="left:293px;top:568.0px;font-size:12px;line-height:24px;color:#b2b2b2;">%</div>
<div style="left:144px;top:596px;width:1px;height:1px;background:#4a4a4a;"></div>
<svg style="left:155px;top:589px;" width="12" height="13" viewBox="0 0 12 13"><circle cx="6" cy="7.6" r="4.9" fill="none" stroke="#c0c0c0" stroke-width="1.15"/><path d="M4.2 1.2 H7.8 M6 1.2 V2.7 M1.6 3.9 L2.9 2.6" stroke="#c0c0c0" stroke-width="1.1"/></svg>
<div style="left:174px;top:586.0px;font-size:12px;line-height:24px;color:#b2b2b2;">End</div>
<div style="left:268px;top:585.0px;font-size:12px;line-height:24px;color:#3a8fe6;">100.0</div>
<div style="left:300px;top:585.0px;font-size:12px;line-height:24px;color:#b2b2b2;">%</div>
<div style="left:144px;top:613px;width:1px;height:1px;background:#4a4a4a;"></div>
<svg style="left:155px;top:606px;" width="12" height="13" viewBox="0 0 12 13"><circle cx="6" cy="7.6" r="4.9" fill="none" stroke="#c0c0c0" stroke-width="1.15"/><path d="M4.2 1.2 H7.8 M6 1.2 V2.7 M1.6 3.9 L2.9 2.6" stroke="#c0c0c0" stroke-width="1.1"/></svg>
<div style="left:174px;top:603.0px;font-size:12px;line-height:24px;color:#b2b2b2;">Offset</div>
<div style="left:268px;top:602.0px;font-size:12px;line-height:24px;color:#3a8fe6;">0</div>
<div style="left:276px;top:603.0px;font-size:11px;line-height:22px;color:#9a9a9a;">x</div>
<div style="left:283px;top:602.0px;font-size:12px;line-height:24px;color:#3a8fe6;">+0.0</div>
<div style="left:307px;top:603.5px;font-size:10px;line-height:20px;color:#b2b2b2;">°</div>
<div style="left:144px;top:630px;width:1px;height:1px;background:#4a4a4a;"></div>
<div style="left:158px;top:620.0px;font-size:12px;line-height:24px;color:#b2b2b2;">Trim Mu... Shapes</div>
<div style="left:267px;top:622px;width:128px;height:16px;background:#1c1c1c;border:1px solid #2f2f2f;box-sizing:border-box;"></div>
<div style="left:275px;top:618.5px;font-size:11px;line-height:22px;color:#b8b8b8;">Simultaneously</div>
<svg style="left:381.5px;top:627px;" width="9" height="6" viewBox="0 0 9 6"><path d="M0.5 0.8 L4.2 4.5 L7.9 0.8" fill="none" stroke="#bdbdbd" stroke-width="1"/></svg>
<div style="left:4px;top:640px;width:14px;height:14px;background:#1b1b1b;"></div>
<svg style="left:5.5px;top:643px;" width="13" height="9" viewBox="0 0 13 9"><path d="M0.3 4.5 Q6.5 -2.3 12.7 4.5 Q6.5 11.3 0.3 4.5Z" fill="#c8c8c8"/><ellipse cx="6.3" cy="4.5" rx="2.5" ry="2.6" fill="#161616"/></svg>
<svg style="left:124px;top:645px;" width="9" height="6" viewBox="0 0 9 6"><path d="M0.5 0.8 L4.5 4.8 L8.5 0.8" fill="none" stroke="#b8b8b8" stroke-width="1.1"/></svg>
<div style="left:141px;top:637.0px;font-size:12px;line-height:24px;color:#b2b2b2;">Stroke 1</div>
<div style="left:267px;top:639px;width:128px;height:16px;background:#1c1c1c;border:1px solid #2f2f2f;box-sizing:border-box;"></div>
<div style="left:275px;top:635.5px;font-size:11px;line-height:22px;color:#b8b8b8;">Normal</div>
<svg style="left:381.5px;top:644px;" width="9" height="6" viewBox="0 0 9 6"><path d="M0.5 0.8 L4.2 4.5 L7.9 0.8" fill="none" stroke="#bdbdbd" stroke-width="1"/></svg>
<div style="left:144px;top:664px;width:1px;height:1px;background:#4a4a4a;"></div>
<div style="left:158px;top:654.0px;font-size:12px;line-height:24px;color:#b2b2b2;">Composite</div>
<div style="left:267px;top:656px;width:128px;height:16px;background:#1c1c1c;border:1px solid #2f2f2f;box-sizing:border-box;"></div>
<div style="left:275px;top:652.5px;font-size:11px;line-height:22px;color:#b8b8b8;">Below Previous in Sa</div>
<svg style="left:381.5px;top:661px;" width="9" height="6" viewBox="0 0 9 6"><path d="M0.5 0.8 L4.2 4.5 L7.9 0.8" fill="none" stroke="#bdbdbd" stroke-width="1"/></svg>
<div style="left:144px;top:681px;width:1px;height:1px;background:#4a4a4a;"></div>
<svg style="left:155px;top:674px;" width="12" height="13" viewBox="0 0 12 13"><circle cx="6" cy="7.6" r="4.9" fill="none" stroke="#c0c0c0" stroke-width="1.15"/><path d="M4.2 1.2 H7.8 M6 1.2 V2.7 M1.6 3.9 L2.9 2.6" stroke="#c0c0c0" stroke-width="1.1"/></svg>
<div style="left:174px;top:671.0px;font-size:12px;line-height:24px;color:#b2b2b2;">Color</div>
<div style="left:267px;top:673px;width:24px;height:16px;background:#232323;border:1px solid #4a4a4a;box-sizing:border-box;border-radius:2px;"></div>
<div style="left:269px;top:675px;width:20px;height:12px;background:#ffffff;"></div>
<div style="left:293px;top:673px;width:24px;height:16px;background:#1e1e1e;border:1px solid #4a4a4a;box-sizing:border-box;border-radius:2px;"></div>
<svg style="left:295px;top:676px;" width="20" height="10" viewBox="0 0 20 10"><path d="M1.2 5 L3.5 3.2 H12 V6.8 H3.5Z" fill="none" stroke="#c4c4c4" stroke-width="0.9"/><rect x="11.5" y="1.5" width="3" height="7" fill="#c4c4c4"/><rect x="14" y="2.8" width="4" height="4.4" fill="#c4c4c4"/></svg>
<div style="left:144px;top:698px;width:1px;height:1px;background:#4a4a4a;"></div>
<svg style="left:155px;top:691px;" width="12" height="13" viewBox="0 0 12 13"><circle cx="6" cy="7.6" r="4.9" fill="none" stroke="#c0c0c0" stroke-width="1.15"/><path d="M4.2 1.2 H7.8 M6 1.2 V2.7 M1.6 3.9 L2.9 2.6" stroke="#c0c0c0" stroke-width="1.1"/></svg>
<div style="left:174px;top:688.0px;font-size:12px;line-height:24px;color:#b2b2b2;">Opacity</div>
<div style="left:269px;top:687.0px;font-size:12px;line-height:24px;color:#3a8fe6;">100</div>
<div style="left:290px;top:687.0px;font-size:12px;line-height:24px;color:#b2b2b2;">%</div>
<svg style="left:7px;top:711px;" width="6" height="9" viewBox="0 0 6 9"><path d="M6 0 V9 L0 4.5Z" fill="#4f4f4f"/></svg>
<div style="left:19px;top:708px;width:14px;height:14px;background:#202020;border:1px solid #2e2e2e;box-sizing:border-box;"></div>
<svg style="left:21px;top:710px;" width="10" height="10" viewBox="0 0 10 10"><path d="M5 0.3 L9.7 5 L5 9.7 L0.3 5Z" fill="#2f8de8"/></svg>
<svg style="left:38px;top:711px;" width="6" height="9" viewBox="0 0 6 9"><path d="M0 0 V9 L6 4.5Z" fill="#4f4f4f"/></svg>
<div style="left:144px;top:715px;width:1px;height:1px;background:#4a4a4a;"></div>
<div style="left:153px;top:708px;width:15px;height:15px;background:#1e1e1e;border:1px solid #2c2c2c;box-sizing:border-box;"></div>
<svg style="left:154px;top:708px;" width="12" height="13" viewBox="0 0 12 13"><circle cx="6" cy="7.6" r="4.9" fill="none" stroke="#2f8de8" stroke-width="1.15"/><path d="M4.2 1.2 H7.8 M6 1.2 V2.7 M1.6 3.9 L2.9 2.6" stroke="#2f8de8" stroke-width="1.1"/><path d="M6 7.6 L8.4 5.2" stroke="#2f8de8" stroke-width="1.1"/></svg>
<svg style="left:172px;top:709px;" width="12" height="11" viewBox="0 0 12 11"><path d="M1 0 V10.3 H12" fill="none" stroke="#c4c4c4" stroke-width="1.1"/><path d="M2 3 L5.5 8 L9.5 2.5" fill="none" stroke="#c4c4c4" stroke-width="1"/></svg>
<div style="left:193px;top:705.0px;font-size:12px;line-height:24px;color:#b2b2b2;">Stroke ...h</div>
<div style="left:268px;top:704.0px;font-size:12px;line-height:24px;color:#3a8fe6;">20.0</div>
<div style="left:144px;top:732px;width:1px;height:1px;background:#4a4a4a;"></div>
<div style="left:158px;top:722.0px;font-size:12px;line-height:24px;color:#b2b2b2;">Line Cap</div>
<div style="left:267px;top:724px;width:128px;height:16px;background:#1c1c1c;border:1px solid #2f2f2f;box-sizing:border-box;"></div>
<div style="left:275px;top:720.5px;font-size:11px;line-height:22px;color:#b8b8b8;">Round Cap</div>
<svg style="left:381.5px;top:729px;" width="9" height="6" viewBox="0 0 9 6"><path d="M0.5 0.8 L4.2 4.5 L7.9 0.8" fill="none" stroke="#bdbdbd" stroke-width="1"/></svg>
<div style="left:144px;top:749px;width:1px;height:1px;background:#4a4a4a;"></div>
<div style="left:158px;top:739.0px;font-size:12px;line-height:24px;color:#b2b2b2;">Line Join</div>
<div style="left:267px;top:741px;width:128px;height:16px;background:#1c1c1c;border:1px solid #2f2f2f;box-sizing:border-box;"></div>
<div style="left:275px;top:737.5px;font-size:11px;line-height:22px;color:#b8b8b8;">Miter Join</div>
<svg style="left:381.5px;top:746px;" width="9" height="6" viewBox="0 0 9 6"><path d="M0.5 0.8 L4.2 4.5 L7.9 0.8" fill="none" stroke="#bdbdbd" stroke-width="1"/></svg>
<div style="left:144px;top:766px;width:1px;height:1px;background:#4a4a4a;"></div>
<svg style="left:155px;top:759px;" width="12" height="13" viewBox="0 0 12 13"><circle cx="6" cy="7.6" r="4.9" fill="none" stroke="#c0c0c0" stroke-width="1.15"/><path d="M4.2 1.2 H7.8 M6 1.2 V2.7 M1.6 3.9 L2.9 2.6" stroke="#c0c0c0" stroke-width="1.1"/></svg>
<div style="left:174px;top:756.0px;font-size:12px;line-height:24px;color:#b2b2b2;">Miter Limit</div>
<div style="left:268px;top:755.0px;font-size:12px;line-height:24px;color:#3a8fe6;">4.0</div>
<div style="left:4px;top:776px;width:14px;height:14px;background:#1b1b1b;"></div>
<svg style="left:5.5px;top:779px;" width="13" height="9" viewBox="0 0 13 9"><path d="M0.3 4.5 Q6.5 -2.3 12.7 4.5 Q6.5 11.3 0.3 4.5Z" fill="#c8c8c8"/><ellipse cx="6.3" cy="4.5" rx="2.5" ry="2.6" fill="#161616"/></svg>
<svg style="left:142px;top:779px;" width="6" height="9" viewBox="0 0 6 9"><path d="M0.8 0.5 L4.8 4.5 L0.8 8.5" fill="none" stroke="#b8b8b8" stroke-width="1.1"/></svg>
<div style="left:158px;top:773.0px;font-size:12px;line-height:24px;color:#b2b2b2;">Dashes</div>
<div style="left:267px;top:775px;width:16px;height:16px;background:#1c1c1c;border:1px solid #303030;box-sizing:border-box;"></div>
<svg style="left:268px;top:776px;" width="14" height="14" viewBox="0 0 14 14"><path d="M7 2 V12 M2 7 H12" stroke="#d0d0d0" stroke-width="1.8"/></svg>
<div style="left:283px;top:775px;width:16px;height:16px;background:#222;border:1px solid #303030;box-sizing:border-box;"></div>
<svg style="left:284px;top:776px;" width="14" height="14" viewBox="0 0 14 14"><path d="M2 7 H12" stroke="#3c3c3c" stroke-width="1.5"/></svg>
<div style="left:4px;top:793px;width:14px;height:14px;background:#1b1b1b;"></div>
<svg style="left:124px;top:796px;" width="6" height="9" viewBox="0 0 6 9"><path d="M0.8 0.5 L4.8 4.5 L0.8 8.5" fill="none" stroke="#b8b8b8" stroke-width="1.1"/></svg>
<div style="left:141px;top:790.0px;font-size:12px;line-height:24px;color:#b2b2b2;">Gradient Fill 1</div>
<div style="left:267px;top:792px;width:128px;height:16px;background:#1c1c1c;border:1px solid #2f2f2f;box-sizing:border-box;"></div>
<div style="left:275px;top:788.5px;font-size:11px;line-height:22px;color:#b8b8b8;">Normal</div>
<svg style="left:381.5px;top:797px;" width="9" height="6" viewBox="0 0 9 6"><path d="M0.5 0.8 L4.2 4.5 L7.9 0.8" fill="none" stroke="#bdbdbd" stroke-width="1"/></svg>
<div style="left:0px;top:809px;width:698px;height:3px;background:#232323;"></div>
<div style="left:0px;top:812px;width:806px;height:1px;background:#0e0e0e;"></div>
<div style="left:0px;top:813px;width:1346px;height:16px;background:#232323;"></div>
<div style="left:3px;top:813px;width:17px;height:16px;background:#232323;border:1px solid #2e2e2e;box-sizing:border-box;"></div>
<svg style="left:6px;top:816px;" width="12" height="12" viewBox="0 0 12 12"><path d="M0.5 6.5 V0.5 H6.5 V2.5 M2.5 8.5 V2.5 H8.5 V4.5" fill="none" stroke="#2f8de8" stroke-width="1"/><rect x="4.5" y="4.5" width="6" height="6" fill="#232323" stroke="#2f8de8" stroke-width="1"/><rect x="7" y="7" width="1" height="1" fill="#2f8de8"/></svg>
<div style="left:21px;top:813px;width:17px;height:16px;background:#232323;border:1px solid #2e2e2e;box-sizing:border-box;"></div>
<svg style="left:24px;top:815px;" width="12" height="12" viewBox="0 0 12 12"><circle cx="4.5" cy="4.5" r="3.5" fill="none" stroke="#2f8de8" stroke-width="1"/><rect x="5.5" y="5.5" width="5" height="5" fill="none" stroke="#2f8de8" stroke-width="1"/><path d="M5.5 5.5 H8 A3.5 3.5 0 0 1 5.5 8Z" fill="#2f8de8"/></svg>
<svg style="left:41px;top:815px;" width="13" height="12" viewBox="0 0 13 12"><path d="M3 0.5 H10 V4 L12 6 L10 8 V11.5 H3 V8 L1 6 L3 4Z" fill="#9a9a9a"/><path d="M5 0.5 V11.5 M8 0.5 V11.5" stroke="#777" stroke-width="0.8"/></svg>
<div style="left:698px;top:436px;width:1px;height:377px;background:#050505;"></div>
<div style="left:699px;top:404px;width:647px;height:62px;background:#232323;"></div>
<div style="left:699px;top:436px;width:647px;height:10px;background:#101010;"></div>
<div style="left:707px;top:437px;width:639px;height:8px;background:#6a6a6a;"></div>
<div style="left:699px;top:437px;width:6px;height:8px;background:#2f8de8;border-radius:5px 0 0 5px;"></div>
<div style="left:705px;top:437px;width:2px;height:8px;background:#1a1a1a;"></div>
<div style="left:706px;top:437px;width:1px;height:8px;background:#2f8de8;"></div>
<div style="left:699px;top:446px;width:647px;height:19px;background:#232323;"></div>
<div style="left:699px;top:465px;width:647px;height:1px;background:#0c0c0c;"></div>
<div style="left:824px;top:460px;width:1px;height:5px;background:#909090;"></div>
<div style="left:814px;top:443.0px;font-size:11px;line-height:22px;color:#a8a8a8;">01s</div>
<div style="left:943px;top:460px;width:1px;height:5px;background:#909090;"></div>
<div style="left:933px;top:443.0px;font-size:11px;line-height:22px;color:#a8a8a8;">02s</div>
<div style="left:1061px;top:460px;width:1px;height:5px;background:#909090;"></div>
<div style="left:1051px;top:443.0px;font-size:11px;line-height:22px;color:#a8a8a8;">03s</div>
<div style="left:1180px;top:460px;width:1px;height:5px;background:#909090;"></div>
<div style="left:1170px;top:443.0px;font-size:11px;line-height:22px;color:#a8a8a8;">04s</div>
<div style="left:1299px;top:460px;width:1px;height:5px;background:#909090;"></div>
<div style="left:1289px;top:443.0px;font-size:11px;line-height:22px;color:#a8a8a8;">05s</div>
<div style="left:703px;top:443.0px;font-size:11px;line-height:22px;color:#a8a8a8;">00s</div>
<div style="left:699px;top:466px;width:647px;height:16px;background:#101010;"></div>
<div style="left:705px;top:467px;width:641px;height:14px;background:#646464;"></div>
<div style="left:700px;top:467px;width:5px;height:14px;background:#2f8de8;border-radius:4px 0 0 4px;"></div>
<div style="left:707px;top:482px;width:639px;height:3px;background:#18c418;"></div>
<div style="left:699px;top:485px;width:647px;height:1px;background:#0c0c0c;"></div>
<div style="left:699px;top:486px;width:647px;height:16px;background:#2a2a2a;"></div>
<div style="left:706px;top:486px;width:640px;height:16px;background:#535d8f;"></div>
<div style="left:699px;top:502px;width:647px;height:1px;background:#1f1f1f;"></div>
<div style="left:699px;top:503px;width:647px;height:16px;background:#333333;"></div>
<div style="left:699px;top:519px;width:647px;height:1px;background:#1e1e1e;"></div>
<div style="left:699px;top:503px;width:7px;height:16px;background:#2c2c2c;"></div>
<div style="left:699px;top:520px;width:647px;height:16px;background:#333333;"></div>
<div style="left:699px;top:536px;width:647px;height:1px;background:#1e1e1e;"></div>
<div style="left:699px;top:520px;width:7px;height:16px;background:#2c2c2c;"></div>
<div style="left:699px;top:537px;width:647px;height:16px;background:#333333;"></div>
<div style="left:699px;top:553px;width:647px;height:1px;background:#1e1e1e;"></div>
<div style="left:699px;top:537px;width:7px;height:16px;background:#2c2c2c;"></div>
<div style="left:699px;top:554px;width:647px;height:16px;background:#333333;"></div>
<div style="left:699px;top:570px;width:647px;height:1px;background:#1e1e1e;"></div>
<div style="left:699px;top:554px;width:7px;height:16px;background:#2c2c2c;"></div>
<div style="left:699px;top:571px;width:647px;height:16px;background:#333333;"></div>
<div style="left:699px;top:587px;width:647px;height:1px;background:#1e1e1e;"></div>
<div style="left:699px;top:571px;width:7px;height:16px;background:#2c2c2c;"></div>
<div style="left:699px;top:588px;width:647px;height:16px;background:#333333;"></div>
<div style="left:699px;top:604px;width:647px;height:1px;background:#1e1e1e;"></div>
<div style="left:699px;top:588px;width:7px;height:16px;background:#2c2c2c;"></div>
<div style="left:699px;top:605px;width:647px;height:16px;background:#333333;"></div>
<div style="left:699px;top:621px;width:647px;height:1px;background:#1e1e1e;"></div>
<div style="left:699px;top:605px;width:7px;height:16px;background:#2c2c2c;"></div>
<div style="left:699px;top:622px;width:647px;height:16px;background:#333333;"></div>
<div style="left:699px;top:638px;width:647px;height:1px;background:#1e1e1e;"></div>
<div style="left:699px;top:622px;width:7px;height:16px;background:#2c2c2c;"></div>
<div style="left:699px;top:639px;width:647px;height:16px;background:#333333;"></div>
<div style="left:699px;top:655px;width:647px;height:1px;background:#1e1e1e;"></div>
<div style="left:699px;top:639px;width:7px;height:16px;background:#2c2c2c;"></div>
<div style="left:699px;top:656px;width:647px;height:16px;background:#333333;"></div>
<div style="left:699px;top:672px;width:647px;height:1px;background:#1e1e1e;"></div>
<div style="left:699px;top:656px;width:7px;height:16px;background:#2c2c2c;"></div>
<div style="left:699px;top:673px;width:647px;height:16px;background:#333333;"></div>
<div style="left:699px;top:689px;width:647px;height:1px;background:#1e1e1e;"></div>
<div style="left:699px;top:673px;width:7px;height:16px;background:#2c2c2c;"></div>
<div style="left:699px;top:690px;width:647px;height:16px;background:#333333;"></div>
<div style="left:699px;top:706px;width:647px;height:1px;background:#1e1e1e;"></div>
<div style="left:699px;top:690px;width:7px;height:16px;background:#2c2c2c;"></div>
<div style="left:699px;top:707px;width:647px;height:16px;background:#333333;"></div>
<div style="left:699px;top:723px;width:647px;height:1px;background:#1e1e1e;"></div>
<div style="left:699px;top:707px;width:7px;height:16px;background:#2c2c2c;"></div>
<div style="left:699px;top:724px;width:647px;height:16px;background:#333333;"></div>
<div style="left:699px;top:740px;width:647px;height:1px;background:#1e1e1e;"></div>
<div style="left:699px;top:724px;width:7px;height:16px;background:#2c2c2c;"></div>
<div style="left:699px;top:741px;width:647px;height:16px;background:#333333;"></div>
<div style="left:699px;top:757px;width:647px;height:1px;background:#1e1e1e;"></div>
<div style="left:699px;top:741px;width:7px;height:16px;background:#2c2c2c;"></div>
<div style="left:699px;top:758px;width:647px;height:16px;background:#333333;"></div>
<div style="left:699px;top:774px;width:647px;height:1px;background:#1e1e1e;"></div>
<div style="left:699px;top:758px;width:7px;height:16px;background:#2c2c2c;"></div>
<div style="left:699px;top:775px;width:647px;height:16px;background:#333333;"></div>
<div style="left:699px;top:791px;width:647px;height:1px;background:#1e1e1e;"></div>
<div style="left:699px;top:775px;width:7px;height:16px;background:#2c2c2c;"></div>
<div style="left:699px;top:792px;width:647px;height:16px;background:#333333;"></div>
<div style="left:699px;top:808px;width:647px;height:1px;background:#1e1e1e;"></div>
<div style="left:699px;top:792px;width:7px;height:16px;background:#2c2c2c;"></div>
<div style="left:699px;top:809px;width:647px;height:3px;background:#333;"></div>
<div style="left:806px;top:812px;width:540px;height:1px;background:#2a2a2a;"></div>
<svg style="left:702px;top:503px;" width="9" height="16" viewBox="0 0 9 16"><path d="M1 3.5 H3.5 V13.5 H1 M8 3.5 H5.5 V13.5 H8" fill="none" stroke="#c4c4c4" stroke-width="1"/></svg>
<svg style="left:702px;top:520px;" width="9" height="16" viewBox="0 0 9 16"><path d="M1 3.5 H3.5 V13.5 H1 M8 3.5 H5.5 V13.5 H8" fill="none" stroke="#c4c4c4" stroke-width="1"/></svg>
<svg style="left:702px;top:537px;" width="9" height="16" viewBox="0 0 9 16"><path d="M1 3.5 H3.5 V13.5 H1 M8 3.5 H5.5 V13.5 H8" fill="none" stroke="#c4c4c4" stroke-width="1"/></svg>
<svg style="left:702px;top:554px;" width="9" height="16" viewBox="0 0 9 16"><path d="M1 3.5 H3.5 V13.5 H1 M8 3.5 H5.5 V13.5 H8" fill="none" stroke="#c4c4c4" stroke-width="1"/></svg>
<svg style="left:702px;top:575px;" width="9" height="9" viewBox="0 0 9 9"><path d="M4.5 0 L9 4.5 L4.5 9 L0 4.5Z" fill="#777"/></svg>
<svg style="left:702px;top:588px;" width="9" height="16" viewBox="0 0 9 16"><path d="M1 3.5 H3.5 V13.5 H1 M8 3.5 H5.5 V13.5 H8" fill="none" stroke="#c4c4c4" stroke-width="1"/></svg>
<svg style="left:702px;top:605px;" width="9" height="16" viewBox="0 0 9 16"><path d="M1 3.5 H3.5 V13.5 H1 M8 3.5 H5.5 V13.5 H8" fill="none" stroke="#c4c4c4" stroke-width="1"/></svg>
<svg style="left:702px;top:639px;" width="9" height="16" viewBox="0 0 9 16"><path d="M1 3.5 H3.5 V13.5 H1 M8 3.5 H5.5 V13.5 H8" fill="none" stroke="#c4c4c4" stroke-width="1"/></svg>
<svg style="left:702px;top:673px;" width="9" height="16" viewBox="0 0 9 16"><path d="M1 3.5 H3.5 V13.5 H1 M8 3.5 H5.5 V13.5 H8" fill="none" stroke="#c4c4c4" stroke-width="1"/></svg>
<svg style="left:702px;top:690px;" width="9" height="16" viewBox="0 0 9 16"><path d="M1 3.5 H3.5 V13.5 H1 M8 3.5 H5.5 V13.5 H8" fill="none" stroke="#c4c4c4" stroke-width="1"/></svg>
<svg style="left:702px;top:711px;" width="9" height="9" viewBox="0 0 9 9"><path d="M4.5 0 L9 4.5 L4.5 9 L0 4.5Z" fill="#777"/></svg>
<svg style="left:702px;top:758px;" width="9" height="16" viewBox="0 0 9 16"><path d="M1 3.5 H3.5 V13.5 H1 M8 3.5 H5.5 V13.5 H8" fill="none" stroke="#c4c4c4" stroke-width="1"/></svg>
<svg style="left:702px;top:775px;" width="9" height="16" viewBox="0 0 9 16"><path d="M1 3.5 H3.5 V13.5 H1 M8 3.5 H5.5 V13.5 H8" fill="none" stroke="#c4c4c4" stroke-width="1"/></svg>
<svg style="left:702px;top:792px;" width="9" height="16" viewBox="0 0 9 16"><path d="M1 3.5 H3.5 V13.5 H1 M8 3.5 H5.5 V13.5 H8" fill="none" stroke="#c4c4c4" stroke-width="1"/></svg>
<svg style="left:700px;top:450px;" width="13" height="15" viewBox="0 0 13 15"><path d="M0 1 H12 V6.5 L6.5 14.5 L6 14.5 L0 6.5Z" fill="#2f8de8"/></svg>
<div style="left:706px;top:451px;width:1px;height:361px;background:#2f8de8;"></div>
<svg style="left:582px;top:571.5px;" width="14" height="13" viewBox="0 0 14 13"><path d="M7.20 6.31 L7.21 6.26 L7.20 6.20 L7.18 6.15 L7.15 6.10 L7.11 6.05 L7.06 6.00 L7.00 5.96 L6.93 5.92 L6.85 5.89 L6.76 5.87 L6.67 5.86 L6.57 5.87 L6.47 5.88 L6.36 5.90 L6.26 5.94 L6.16 5.99 L6.06 6.05 L5.97 6.13 L5.89 6.22 L5.82 6.32 L5.76 6.43 L5.71 6.55 L5.68 6.67 L5.66 6.81 L5.67 6.94 L5.69 7.09 L5.73 7.23 L5.79 7.37 L5.87 7.50 L5.97 7.64 L6.09 7.76 L6.23 7.87 L6.39 7.98 L6.56 8.06 L6.75 8.13 L6.95 8.19 L7.16 8.22 L7.37 8.24 L7.60 8.23 L7.82 8.20 L8.04 8.15 L8.27 8.07 L8.48 7.97 L8.68 7.85 L8.87 7.71 L9.05 7.55 L9.21 7.36 L9.34 7.16 L9.45 6.95 L9.54 6.72 L9.59 6.47 L9.62 6.22 L9.62 5.97 L9.58 5.71 L9.51 5.46 L9.41 5.21 L9.27 4.96 L9.10 4.73 L8.91 4.51 L8.68 4.31 L8.42 4.13 L8.14 3.97 L7.84 3.84 L7.52 3.74 L7.18 3.67 L6.83 3.63 L6.48 3.62 L6.12 3.65 L5.76 3.71 L5.41 3.81 L5.06 3.94 L4.73 4.11 L4.42 4.31 L4.14 4.54 L3.87 4.80 L3.65 5.09 L3.45 5.40 L3.29 5.73 L3.17 6.08 L3.10 6.44 L3.07 6.81 L3.09 7.19 L3.15 7.56 L3.26 7.94 L3.42 8.30 L3.62 8.65 L3.87 8.98 L4.16 9.29 L4.49 9.58 L4.86 9.83 L5.26 10.05 L5.69 10.23 L6.14 10.37 L6.61 10.47 L7.10 10.53 L7.60 10.53 L8.09 10.49 L8.59 10.40 L9.07 10.27 L9.54 10.08 L9.99 9.85 L10.42 9.58 L10.81 9.27 L11.16 8.91 L11.47 8.52 L11.73 8.11 L11.94 7.66 L12.10 7.19 L12.20 6.71 L12.24 6.22 L12.22 5.72 L12.14 5.22 L11.99 4.73 L11.79 4.25 L11.53 3.79 L11.20 3.35 L10.83 2.94 L10.40 2.57 L9.93 2.24 L9.41 1.95" fill="none" stroke="#b4b4b4" stroke-width="1.15" stroke-linecap="round"/></svg>
<svg style="left:582px;top:588.5px;" width="14" height="13" viewBox="0 0 14 13"><path d="M7.20 6.31 L7.21 6.26 L7.20 6.20 L7.18 6.15 L7.15 6.10 L7.11 6.05 L7.06 6.00 L7.00 5.96 L6.93 5.92 L6.85 5.89 L6.76 5.87 L6.67 5.86 L6.57 5.87 L6.47 5.88 L6.36 5.90 L6.26 5.94 L6.16 5.99 L6.06 6.05 L5.97 6.13 L5.89 6.22 L5.82 6.32 L5.76 6.43 L5.71 6.55 L5.68 6.67 L5.66 6.81 L5.67 6.94 L5.69 7.09 L5.73 7.23 L5.79 7.37 L5.87 7.50 L5.97 7.64 L6.09 7.76 L6.23 7.87 L6.39 7.98 L6.56 8.06 L6.75 8.13 L6.95 8.19 L7.16 8.22 L7.37 8.24 L7.60 8.23 L7.82 8.20 L8.04 8.15 L8.27 8.07 L8.48 7.97 L8.68 7.85 L8.87 7.71 L9.05 7.55 L9.21 7.36 L9.34 7.16 L9.45 6.95 L9.54 6.72 L9.59 6.47 L9.62 6.22 L9.62 5.97 L9.58 5.71 L9.51 5.46 L9.41 5.21 L9.27 4.96 L9.10 4.73 L8.91 4.51 L8.68 4.31 L8.42 4.13 L8.14 3.97 L7.84 3.84 L7.52 3.74 L7.18 3.67 L6.83 3.63 L6.48 3.62 L6.12 3.65 L5.76 3.71 L5.41 3.81 L5.06 3.94 L4.73 4.11 L4.42 4.31 L4.14 4.54 L3.87 4.80 L3.65 5.09 L3.45 5.40 L3.29 5.73 L3.17 6.08 L3.10 6.44 L3.07 6.81 L3.09 7.19 L3.15 7.56 L3.26 7.94 L3.42 8.30 L3.62 8.65 L3.87 8.98 L4.16 9.29 L4.49 9.58 L4.86 9.83 L5.26 10.05 L5.69 10.23 L6.14 10.37 L6.61 10.47 L7.10 10.53 L7.60 10.53 L8.09 10.49 L8.59 10.40 L9.07 10.27 L9.54 10.08 L9.99 9.85 L10.42 9.58 L10.81 9.27 L11.16 8.91 L11.47 8.52 L11.73 8.11 L11.94 7.66 L12.10 7.19 L12.20 6.71 L12.24 6.22 L12.22 5.72 L12.14 5.22 L11.99 4.73 L11.79 4.25 L11.53 3.79 L11.20 3.35 L10.83 2.94 L10.40 2.57 L9.93 2.24 L9.41 1.95" fill="none" stroke="#b4b4b4" stroke-width="1.15" stroke-linecap="round"/></svg>
<svg style="left:582px;top:605.5px;" width="14" height="13" viewBox="0 0 14 13"><path d="M7.20 6.31 L7.21 6.26 L7.20 6.20 L7.18 6.15 L7.15 6.10 L7.11 6.05 L7.06 6.00 L7.00 5.96 L6.93 5.92 L6.85 5.89 L6.76 5.87 L6.67 5.86 L6.57 5.87 L6.47 5.88 L6.36 5.90 L6.26 5.94 L6.16 5.99 L6.06 6.05 L5.97 6.13 L5.89 6.22 L5.82 6.32 L5.76 6.43 L5.71 6.55 L5.68 6.67 L5.66 6.81 L5.67 6.94 L5.69 7.09 L5.73 7.23 L5.79 7.37 L5.87 7.50 L5.97 7.64 L6.09 7.76 L6.23 7.87 L6.39 7.98 L6.56 8.06 L6.75 8.13 L6.95 8.19 L7.16 8.22 L7.37 8.24 L7.60 8.23 L7.82 8.20 L8.04 8.15 L8.27 8.07 L8.48 7.97 L8.68 7.85 L8.87 7.71 L9.05 7.55 L9.21 7.36 L9.34 7.16 L9.45 6.95 L9.54 6.72 L9.59 6.47 L9.62 6.22 L9.62 5.97 L9.58 5.71 L9.51 5.46 L9.41 5.21 L9.27 4.96 L9.10 4.73 L8.91 4.51 L8.68 4.31 L8.42 4.13 L8.14 3.97 L7.84 3.84 L7.52 3.74 L7.18 3.67 L6.83 3.63 L6.48 3.62 L6.12 3.65 L5.76 3.71 L5.41 3.81 L5.06 3.94 L4.73 4.11 L4.42 4.31 L4.14 4.54 L3.87 4.80 L3.65 5.09 L3.45 5.40 L3.29 5.73 L3.17 6.08 L3.10 6.44 L3.07 6.81 L3.09 7.19 L3.15 7.56 L3.26 7.94 L3.42 8.30 L3.62 8.65 L3.87 8.98 L4.16 9.29 L4.49 9.58 L4.86 9.83 L5.26 10.05 L5.69 10.23 L6.14 10.37 L6.61 10.47 L7.10 10.53 L7.60 10.53 L8.09 10.49 L8.59 10.40 L9.07 10.27 L9.54 10.08 L9.99 9.85 L10.42 9.58 L10.81 9.27 L11.16 8.91 L11.47 8.52 L11.73 8.11 L11.94 7.66 L12.10 7.19 L12.20 6.71 L12.24 6.22 L12.22 5.72 L12.14 5.22 L11.99 4.73 L11.79 4.25 L11.53 3.79 L11.20 3.35 L10.83 2.94 L10.40 2.57 L9.93 2.24 L9.41 1.95" fill="none" stroke="#b4b4b4" stroke-width="1.15" stroke-linecap="round"/></svg>
<svg style="left:582px;top:622.5px;" width="14" height="13" viewBox="0 0 14 13"><path d="M7.20 6.31 L7.21 6.26 L7.20 6.20 L7.18 6.15 L7.15 6.10 L7.11 6.05 L7.06 6.00 L7.00 5.96 L6.93 5.92 L6.85 5.89 L6.76 5.87 L6.67 5.86 L6.57 5.87 L6.47 5.88 L6.36 5.90 L6.26 5.94 L6.16 5.99 L6.06 6.05 L5.97 6.13 L5.89 6.22 L5.82 6.32 L5.76 6.43 L5.71 6.55 L5.68 6.67 L5.66 6.81 L5.67 6.94 L5.69 7.09 L5.73 7.23 L5.79 7.37 L5.87 7.50 L5.97 7.64 L6.09 7.76 L6.23 7.87 L6.39 7.98 L6.56 8.06 L6.75 8.13 L6.95 8.19 L7.16 8.22 L7.37 8.24 L7.60 8.23 L7.82 8.20 L8.04 8.15 L8.27 8.07 L8.48 7.97 L8.68 7.85 L8.87 7.71 L9.05 7.55 L9.21 7.36 L9.34 7.16 L9.45 6.95 L9.54 6.72 L9.59 6.47 L9.62 6.22 L9.62 5.97 L9.58 5.71 L9.51 5.46 L9.41 5.21 L9.27 4.96 L9.10 4.73 L8.91 4.51 L8.68 4.31 L8.42 4.13 L8.14 3.97 L7.84 3.84 L7.52 3.74 L7.18 3.67 L6.83 3.63 L6.48 3.62 L6.12 3.65 L5.76 3.71 L5.41 3.81 L5.06 3.94 L4.73 4.11 L4.42 4.31 L4.14 4.54 L3.87 4.80 L3.65 5.09 L3.45 5.40 L3.29 5.73 L3.17 6.08 L3.10 6.44 L3.07 6.81 L3.09 7.19 L3.15 7.56 L3.26 7.94 L3.42 8.30 L3.62 8.65 L3.87 8.98 L4.16 9.29 L4.49 9.58 L4.86 9.83 L5.26 10.05 L5.69 10.23 L6.14 10.37 L6.61 10.47 L7.10 10.53 L7.60 10.53 L8.09 10.49 L8.59 10.40 L9.07 10.27 L9.54 10.08 L9.99 9.85 L10.42 9.58 L10.81 9.27 L11.16 8.91 L11.47 8.52 L11.73 8.11 L11.94 7.66 L12.10 7.19 L12.20 6.71 L12.24 6.22 L12.22 5.72 L12.14 5.22 L11.99 4.73 L11.79 4.25 L11.53 3.79 L11.20 3.35 L10.83 2.94 L10.40 2.57 L9.93 2.24 L9.41 1.95" fill="none" stroke="#b4b4b4" stroke-width="1.15" stroke-linecap="round"/></svg>
<svg style="left:582px;top:656.5px;" width="14" height="13" viewBox="0 0 14 13"><path d="M7.20 6.31 L7.21 6.26 L7.20 6.20 L7.18 6.15 L7.15 6.10 L7.11 6.05 L7.06 6.00 L7.00 5.96 L6.93 5.92 L6.85 5.89 L6.76 5.87 L6.67 5.86 L6.57 5.87 L6.47 5.88 L6.36 5.90 L6.26 5.94 L6.16 5.99 L6.06 6.05 L5.97 6.13 L5.89 6.22 L5.82 6.32 L5.76 6.43 L5.71 6.55 L5.68 6.67 L5.66 6.81 L5.67 6.94 L5.69 7.09 L5.73 7.23 L5.79 7.37 L5.87 7.50 L5.97 7.64 L6.09 7.76 L6.23 7.87 L6.39 7.98 L6.56 8.06 L6.75 8.13 L6.95 8.19 L7.16 8.22 L7.37 8.24 L7.60 8.23 L7.82 8.20 L8.04 8.15 L8.27 8.07 L8.48 7.97 L8.68 7.85 L8.87 7.71 L9.05 7.55 L9.21 7.36 L9.34 7.16 L9.45 6.95 L9.54 6.72 L9.59 6.47 L9.62 6.22 L9.62 5.97 L9.58 5.71 L9.51 5.46 L9.41 5.21 L9.27 4.96 L9.10 4.73 L8.91 4.51 L8.68 4.31 L8.42 4.13 L8.14 3.97 L7.84 3.84 L7.52 3.74 L7.18 3.67 L6.83 3.63 L6.48 3.62 L6.12 3.65 L5.76 3.71 L5.41 3.81 L5.06 3.94 L4.73 4.11 L4.42 4.31 L4.14 4.54 L3.87 4.80 L3.65 5.09 L3.45 5.40 L3.29 5.73 L3.17 6.08 L3.10 6.44 L3.07 6.81 L3.09 7.19 L3.15 7.56 L3.26 7.94 L3.42 8.30 L3.62 8.65 L3.87 8.98 L4.16 9.29 L4.49 9.58 L4.86 9.83 L5.26 10.05 L5.69 10.23 L6.14 10.37 L6.61 10.47 L7.10 10.53 L7.60 10.53 L8.09 10.49 L8.59 10.40 L9.07 10.27 L9.54 10.08 L9.99 9.85 L10.42 9.58 L10.81 9.27 L11.16 8.91 L11.47 8.52 L11.73 8.11 L11.94 7.66 L12.10 7.19 L12.20 6.71 L12.24 6.22 L12.22 5.72 L12.14 5.22 L11.99 4.73 L11.79 4.25 L11.53 3.79 L11.20 3.35 L10.83 2.94 L10.40 2.57 L9.93 2.24 L9.41 1.95" fill="none" stroke="#b4b4b4" stroke-width="1.15" stroke-linecap="round"/></svg>
<svg style="left:582px;top:673.5px;" width="14" height="13" viewBox="0 0 14 13"><path d="M7.20 6.31 L7.21 6.26 L7.20 6.20 L7.18 6.15 L7.15 6.10 L7.11 6.05 L7.06 6.00 L7.00 5.96 L6.93 5.92 L6.85 5.89 L6.76 5.87 L6.67 5.86 L6.57 5.87 L6.47 5.88 L6.36 5.90 L6.26 5.94 L6.16 5.99 L6.06 6.05 L5.97 6.13 L5.89 6.22 L5.82 6.32 L5.76 6.43 L5.71 6.55 L5.68 6.67 L5.66 6.81 L5.67 6.94 L5.69 7.09 L5.73 7.23 L5.79 7.37 L5.87 7.50 L5.97 7.64 L6.09 7.76 L6.23 7.87 L6.39 7.98 L6.56 8.06 L6.75 8.13 L6.95 8.19 L7.16 8.22 L7.37 8.24 L7.60 8.23 L7.82 8.20 L8.04 8.15 L8.27 8.07 L8.48 7.97 L8.68 7.85 L8.87 7.71 L9.05 7.55 L9.21 7.36 L9.34 7.16 L9.45 6.95 L9.54 6.72 L9.59 6.47 L9.62 6.22 L9.62 5.97 L9.58 5.71 L9.51 5.46 L9.41 5.21 L9.27 4.96 L9.10 4.73 L8.91 4.51 L8.68 4.31 L8.42 4.13 L8.14 3.97 L7.84 3.84 L7.52 3.74 L7.18 3.67 L6.83 3.63 L6.48 3.62 L6.12 3.65 L5.76 3.71 L5.41 3.81 L5.06 3.94 L4.73 4.11 L4.42 4.31 L4.14 4.54 L3.87 4.80 L3.65 5.09 L3.45 5.40 L3.29 5.73 L3.17 6.08 L3.10 6.44 L3.07 6.81 L3.09 7.19 L3.15 7.56 L3.26 7.94 L3.42 8.30 L3.62 8.65 L3.87 8.98 L4.16 9.29 L4.49 9.58 L4.86 9.83 L5.26 10.05 L5.69 10.23 L6.14 10.37 L6.61 10.47 L7.10 10.53 L7.60 10.53 L8.09 10.49 L8.59 10.40 L9.07 10.27 L9.54 10.08 L9.99 9.85 L10.42 9.58 L10.81 9.27 L11.16 8.91 L11.47 8.52 L11.73 8.11 L11.94 7.66 L12.10 7.19 L12.20 6.71 L12.24 6.22 L12.22 5.72 L12.14 5.22 L11.99 4.73 L11.79 4.25 L11.53 3.79 L11.20 3.35 L10.83 2.94 L10.40 2.57 L9.93 2.24 L9.41 1.95" fill="none" stroke="#b4b4b4" stroke-width="1.15" stroke-linecap="round"/></svg>
<svg style="left:582px;top:690.5px;" width="14" height="13" viewBox="0 0 14 13"><path d="M7.20 6.31 L7.21 6.26 L7.20 6.20 L7.18 6.15 L7.15 6.10 L7.11 6.05 L7.06 6.00 L7.00 5.96 L6.93 5.92 L6.85 5.89 L6.76 5.87 L6.67 5.86 L6.57 5.87 L6.47 5.88 L6.36 5.90 L6.26 5.94 L6.16 5.99 L6.06 6.05 L5.97 6.13 L5.89 6.22 L5.82 6.32 L5.76 6.43 L5.71 6.55 L5.68 6.67 L5.66 6.81 L5.67 6.94 L5.69 7.09 L5.73 7.23 L5.79 7.37 L5.87 7.50 L5.97 7.64 L6.09 7.76 L6.23 7.87 L6.39 7.98 L6.56 8.06 L6.75 8.13 L6.95 8.19 L7.16 8.22 L7.37 8.24 L7.60 8.23 L7.82 8.20 L8.04 8.15 L8.27 8.07 L8.48 7.97 L8.68 7.85 L8.87 7.71 L9.05 7.55 L9.21 7.36 L9.34 7.16 L9.45 6.95 L9.54 6.72 L9.59 6.47 L9.62 6.22 L9.62 5.97 L9.58 5.71 L9.51 5.46 L9.41 5.21 L9.27 4.96 L9.10 4.73 L8.91 4.51 L8.68 4.31 L8.42 4.13 L8.14 3.97 L7.84 3.84 L7.52 3.74 L7.18 3.67 L6.83 3.63 L6.48 3.62 L6.12 3.65 L5.76 3.71 L5.41 3.81 L5.06 3.94 L4.73 4.11 L4.42 4.31 L4.14 4.54 L3.87 4.80 L3.65 5.09 L3.45 5.40 L3.29 5.73 L3.17 6.08 L3.10 6.44 L3.07 6.81 L3.09 7.19 L3.15 7.56 L3.26 7.94 L3.42 8.30 L3.62 8.65 L3.87 8.98 L4.16 9.29 L4.49 9.58 L4.86 9.83 L5.26 10.05 L5.69 10.23 L6.14 10.37 L6.61 10.47 L7.10 10.53 L7.60 10.53 L8.09 10.49 L8.59 10.40 L9.07 10.27 L9.54 10.08 L9.99 9.85 L10.42 9.58 L10.81 9.27 L11.16 8.91 L11.47 8.52 L11.73 8.11 L11.94 7.66 L12.10 7.19 L12.20 6.71 L12.24 6.22 L12.22 5.72 L12.14 5.22 L11.99 4.73 L11.79 4.25 L11.53 3.79 L11.20 3.35 L10.83 2.94 L10.40 2.57 L9.93 2.24 L9.41 1.95" fill="none" stroke="#b4b4b4" stroke-width="1.15" stroke-linecap="round"/></svg>
<svg style="left:582px;top:707.5px;" width="14" height="13" viewBox="0 0 14 13"><path d="M7.20 6.31 L7.21 6.26 L7.20 6.20 L7.18 6.15 L7.15 6.10 L7.11 6.05 L7.06 6.00 L7.00 5.96 L6.93 5.92 L6.85 5.89 L6.76 5.87 L6.67 5.86 L6.57 5.87 L6.47 5.88 L6.36 5.90 L6.26 5.94 L6.16 5.99 L6.06 6.05 L5.97 6.13 L5.89 6.22 L5.82 6.32 L5.76 6.43 L5.71 6.55 L5.68 6.67 L5.66 6.81 L5.67 6.94 L5.69 7.09 L5.73 7.23 L5.79 7.37 L5.87 7.50 L5.97 7.64 L6.09 7.76 L6.23 7.87 L6.39 7.98 L6.56 8.06 L6.75 8.13 L6.95 8.19 L7.16 8.22 L7.37 8.24 L7.60 8.23 L7.82 8.20 L8.04 8.15 L8.27 8.07 L8.48 7.97 L8.68 7.85 L8.87 7.71 L9.05 7.55 L9.21 7.36 L9.34 7.16 L9.45 6.95 L9.54 6.72 L9.59 6.47 L9.62 6.22 L9.62 5.97 L9.58 5.71 L9.51 5.46 L9.41 5.21 L9.27 4.96 L9.10 4.73 L8.91 4.51 L8.68 4.31 L8.42 4.13 L8.14 3.97 L7.84 3.84 L7.52 3.74 L7.18 3.67 L6.83 3.63 L6.48 3.62 L6.12 3.65 L5.76 3.71 L5.41 3.81 L5.06 3.94 L4.73 4.11 L4.42 4.31 L4.14 4.54 L3.87 4.80 L3.65 5.09 L3.45 5.40 L3.29 5.73 L3.17 6.08 L3.10 6.44 L3.07 6.81 L3.09 7.19 L3.15 7.56 L3.26 7.94 L3.42 8.30 L3.62 8.65 L3.87 8.98 L4.16 9.29 L4.49 9.58 L4.86 9.83 L5.26 10.05 L5.69 10.23 L6.14 10.37 L6.61 10.47 L7.10 10.53 L7.60 10.53 L8.09 10.49 L8.59 10.40 L9.07 10.27 L9.54 10.08 L9.99 9.85 L10.42 9.58 L10.81 9.27 L11.16 8.91 L11.47 8.52 L11.73 8.11 L11.94 7.66 L12.10 7.19 L12.20 6.71 L12.24 6.22 L12.22 5.72 L12.14 5.22 L11.99 4.73 L11.79 4.25 L11.53 3.79 L11.20 3.35 L10.83 2.94 L10.40 2.57 L9.93 2.24 L9.41 1.95" fill="none" stroke="#b4b4b4" stroke-width="1.15" stroke-linecap="round"/></svg>
<svg style="left:582px;top:724.5px;" width="14" height="13" viewBox="0 0 14 13"><path d="M7.20 6.31 L7.21 6.26 L7.20 6.20 L7.18 6.15 L7.15 6.10 L7.11 6.05 L7.06 6.00 L7.00 5.96 L6.93 5.92 L6.85 5.89 L6.76 5.87 L6.67 5.86 L6.57 5.87 L6.47 5.88 L6.36 5.90 L6.26 5.94 L6.16 5.99 L6.06 6.05 L5.97 6.13 L5.89 6.22 L5.82 6.32 L5.76 6.43 L5.71 6.55 L5.68 6.67 L5.66 6.81 L5.67 6.94 L5.69 7.09 L5.73 7.23 L5.79 7.37 L5.87 7.50 L5.97 7.64 L6.09 7.76 L6.23 7.87 L6.39 7.98 L6.56 8.06 L6.75 8.13 L6.95 8.19 L7.16 8.22 L7.37 8.24 L7.60 8.23 L7.82 8.20 L8.04 8.15 L8.27 8.07 L8.48 7.97 L8.68 7.85 L8.87 7.71 L9.05 7.55 L9.21 7.36 L9.34 7.16 L9.45 6.95 L9.54 6.72 L9.59 6.47 L9.62 6.22 L9.62 5.97 L9.58 5.71 L9.51 5.46 L9.41 5.21 L9.27 4.96 L9.10 4.73 L8.91 4.51 L8.68 4.31 L8.42 4.13 L8.14 3.97 L7.84 3.84 L7.52 3.74 L7.18 3.67 L6.83 3.63 L6.48 3.62 L6.12 3.65 L5.76 3.71 L5.41 3.81 L5.06 3.94 L4.73 4.11 L4.42 4.31 L4.14 4.54 L3.87 4.80 L3.65 5.09 L3.45 5.40 L3.29 5.73 L3.17 6.08 L3.10 6.44 L3.07 6.81 L3.09 7.19 L3.15 7.56 L3.26 7.94 L3.42 8.30 L3.62 8.65 L3.87 8.98 L4.16 9.29 L4.49 9.58 L4.86 9.83 L5.26 10.05 L5.69 10.23 L6.14 10.37 L6.61 10.47 L7.10 10.53 L7.60 10.53 L8.09 10.49 L8.59 10.40 L9.07 10.27 L9.54 10.08 L9.99 9.85 L10.42 9.58 L10.81 9.27 L11.16 8.91 L11.47 8.52 L11.73 8.11 L11.94 7.66 L12.10 7.19 L12.20 6.71 L12.24 6.22 L12.22 5.72 L12.14 5.22 L11.99 4.73 L11.79 4.25 L11.53 3.79 L11.20 3.35 L10.83 2.94 L10.40 2.57 L9.93 2.24 L9.41 1.95" fill="none" stroke="#b4b4b4" stroke-width="1.15" stroke-linecap="round"/></svg>
<svg style="left:582px;top:741.5px;" width="14" height="13" viewBox="0 0 14 13"><path d="M7.20 6.31 L7.21 6.26 L7.20 6.20 L7.18 6.15 L7.15 6.10 L7.11 6.05 L7.06 6.00 L7.00 5.96 L6.93 5.92 L6.85 5.89 L6.76 5.87 L6.67 5.86 L6.57 5.87 L6.47 5.88 L6.36 5.90 L6.26 5.94 L6.16 5.99 L6.06 6.05 L5.97 6.13 L5.89 6.22 L5.82 6.32 L5.76 6.43 L5.71 6.55 L5.68 6.67 L5.66 6.81 L5.67 6.94 L5.69 7.09 L5.73 7.23 L5.79 7.37 L5.87 7.50 L5.97 7.64 L6.09 7.76 L6.23 7.87 L6.39 7.98 L6.56 8.06 L6.75 8.13 L6.95 8.19 L7.16 8.22 L7.37 8.24 L7.60 8.23 L7.82 8.20 L8.04 8.15 L8.27 8.07 L8.48 7.97 L8.68 7.85 L8.87 7.71 L9.05 7.55 L9.21 7.36 L9.34 7.16 L9.45 6.95 L9.54 6.72 L9.59 6.47 L9.62 6.22 L9.62 5.97 L9.58 5.71 L9.51 5.46 L9.41 5.21 L9.27 4.96 L9.10 4.73 L8.91 4.51 L8.68 4.31 L8.42 4.13 L8.14 3.97 L7.84 3.84 L7.52 3.74 L7.18 3.67 L6.83 3.63 L6.48 3.62 L6.12 3.65 L5.76 3.71 L5.41 3.81 L5.06 3.94 L4.73 4.11 L4.42 4.31 L4.14 4.54 L3.87 4.80 L3.65 5.09 L3.45 5.40 L3.29 5.73 L3.17 6.08 L3.10 6.44 L3.07 6.81 L3.09 7.19 L3.15 7.56 L3.26 7.94 L3.42 8.30 L3.62 8.65 L3.87 8.98 L4.16 9.29 L4.49 9.58 L4.86 9.83 L5.26 10.05 L5.69 10.23 L6.14 10.37 L6.61 10.47 L7.10 10.53 L7.60 10.53 L8.09 10.49 L8.59 10.40 L9.07 10.27 L9.54 10.08 L9.99 9.85 L10.42 9.58 L10.81 9.27 L11.16 8.91 L11.47 8.52 L11.73 8.11 L11.94 7.66 L12.10 7.19 L12.20 6.71 L12.24 6.22 L12.22 5.72 L12.14 5.22 L11.99 4.73 L11.79 4.25 L11.53 3.79 L11.20 3.35 L10.83 2.94 L10.40 2.57 L9.93 2.24 L9.41 1.95" fill="none" stroke="#b4b4b4" stroke-width="1.15" stroke-linecap="round"/></svg>
<svg style="left:582px;top:758.5px;" width="14" height="13" viewBox="0 0 14 13"><path d="M7.20 6.31 L7.21 6.26 L7.20 6.20 L7.18 6.15 L7.15 6.10 L7.11 6.05 L7.06 6.00 L7.00 5.96 L6.93 5.92 L6.85 5.89 L6.76 5.87 L6.67 5.86 L6.57 5.87 L6.47 5.88 L6.36 5.90 L6.26 5.94 L6.16 5.99 L6.06 6.05 L5.97 6.13 L5.89 6.22 L5.82 6.32 L5.76 6.43 L5.71 6.55 L5.68 6.67 L5.66 6.81 L5.67 6.94 L5.69 7.09 L5.73 7.23 L5.79 7.37 L5.87 7.50 L5.97 7.64 L6.09 7.76 L6.23 7.87 L6.39 7.98 L6.56 8.06 L6.75 8.13 L6.95 8.19 L7.16 8.22 L7.37 8.24 L7.60 8.23 L7.82 8.20 L8.04 8.15 L8.27 8.07 L8.48 7.97 L8.68 7.85 L8.87 7.71 L9.05 7.55 L9.21 7.36 L9.34 7.16 L9.45 6.95 L9.54 6.72 L9.59 6.47 L9.62 6.22 L9.62 5.97 L9.58 5.71 L9.51 5.46 L9.41 5.21 L9.27 4.96 L9.10 4.73 L8.91 4.51 L8.68 4.31 L8.42 4.13 L8.14 3.97 L7.84 3.84 L7.52 3.74 L7.18 3.67 L6.83 3.63 L6.48 3.62 L6.12 3.65 L5.76 3.71 L5.41 3.81 L5.06 3.94 L4.73 4.11 L4.42 4.31 L4.14 4.54 L3.87 4.80 L3.65 5.09 L3.45 5.40 L3.29 5.73 L3.17 6.08 L3.10 6.44 L3.07 6.81 L3.09 7.19 L3.15 7.56 L3.26 7.94 L3.42 8.30 L3.62 8.65 L3.87 8.98 L4.16 9.29 L4.49 9.58 L4.86 9.83 L5.26 10.05 L5.69 10.23 L6.14 10.37 L6.61 10.47 L7.10 10.53 L7.60 10.53 L8.09 10.49 L8.59 10.40 L9.07 10.27 L9.54 10.08 L9.99 9.85 L10.42 9.58 L10.81 9.27 L11.16 8.91 L11.47 8.52 L11.73 8.11 L11.94 7.66 L12.10 7.19 L12.20 6.71 L12.24 6.22 L12.22 5.72 L12.14 5.22 L11.99 4.73 L11.79 4.25 L11.53 3.79 L11.20 3.35 L10.83 2.94 L10.40 2.57 L9.93 2.24 L9.41 1.95" fill="none" stroke="#b4b4b4" stroke-width="1.15" stroke-linecap="round"/></svg>
<svg style="left:703px;top:816px;" width="12" height="8" viewBox="0 0 12 8"><path d="M1 6.5 L4.5 3.5 L6 4.5 L8 2 L11 6.5Z" fill="#bdbdbd"/></svg>
<svg style="left:724px;top:816px;" width="12" height="12" viewBox="0 0 12 12"><circle cx="6" cy="6" r="4.3" fill="none" stroke="#9a9a9a" stroke-width="1.8"/></svg>
<div style="left:735px;top:820px;width:38px;height:2px;background:#404040;"></div>
<svg style="left:784px;top:816px;" width="18" height="9" viewBox="0 0 18 9"><path d="M1 8 L4.5 3.5 L6.5 3.5 L3.5 8Z M5 8 L10.5 1 L17 8Z" fill="#bdbdbd"/></svg>
<div style="left:790px;top:55px;width:114px;height:74px;border:3px solid #ed1c24;box-sizing:border-box;"></div>
<div style="left:121px;top:551px;width:216px;height:41px;border:3px solid #ed1c24;box-sizing:border-box;"></div>
<div style="left:138px;top:688px;width:190px;height:45px;border:3px solid #ed1c24;box-sizing:border-box;"></div>
<svg style="left:0px;top:0px;pointer-events:none;" width="1346" height="829" viewBox="0 0 1346 829"><path d="M146.62 282.35 L245.30 501.75 L238.77 503.12 L258.00 519.00 L258.27 494.07 L253.01 498.16 L148.98 281.25Z" fill="#ed1c24"/><circle cx="147.8" cy="281.8" r="1.3" fill="#ed1c24"/><path d="M394.13 642.49 L797.08 186.56 L800.61 191.64 L807.00 168.00 L784.43 177.49 L789.93 180.31 L391.87 640.51Z" fill="#ed1c24"/><circle cx="393" cy="641.5" r="1.5" fill="#ed1c24"/></svg>
</body></html>
